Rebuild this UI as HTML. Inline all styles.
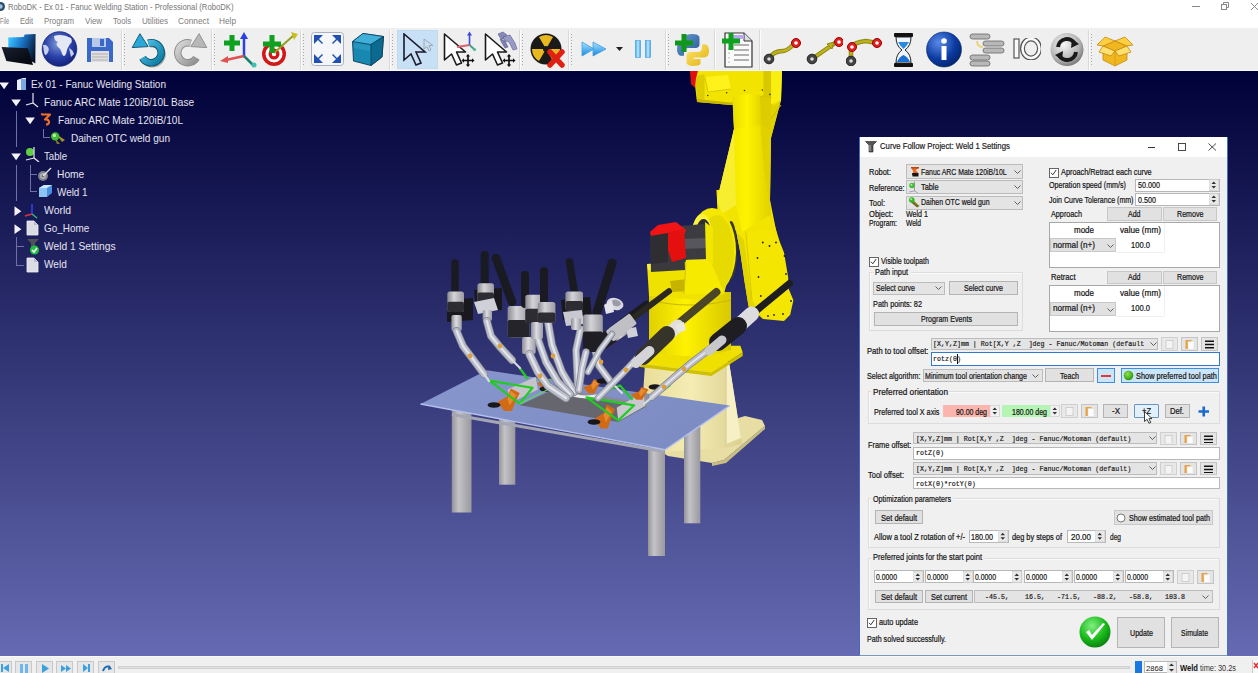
<!DOCTYPE html><html><head><meta charset="utf-8"><style>html,body{margin:0;padding:0;width:1258px;height:673px;overflow:hidden;background:#f0f0f0;}body{position:relative;font-family:"Liberation Sans",sans-serif;}.t{position:absolute;white-space:pre;transform-origin:0 0;-webkit-font-smoothing:antialiased;}.r{position:absolute;box-sizing:border-box;}</style></head><body><div class="r" style="left:0px;top:0px;width:1258px;height:28px;background:#ffffff;"></div>
<svg class="r" style="left:0px;top:2px;" width="6" height="9" viewBox="0 0 6 9"><circle cx="0.5" cy="4.5" r="4.5" fill="#2b4a6a"/><circle cx="0.5" cy="4.5" r="2.2" fill="#9fc0e0"/></svg>
<div class="t" style="left:7.50px;top:1.96px;font-size:9.5px;line-height:9.5px;color:#767676;transform:scaleX(0.8109);">RoboDK - Ex 01 - Fanuc Welding Station - Professional (RoboDK)</div>
<div class="r" style="left:1192px;top:6px;width:8px;height:1px;background:#888;"></div>
<svg class="r" style="left:1220px;top:2px;" width="9" height="9" viewBox="0 0 9 9"><rect x="1.5" y="2.5" width="5" height="5" fill="none" stroke="#888" stroke-width="1"/><path d="M3.5 2.5V0.5H8.5V5.5H6.5" fill="none" stroke="#888" stroke-width="1"/></svg>
<svg class="r" style="left:1250px;top:2px;" width="8" height="9" viewBox="0 0 8 9"><path d="M1 1L8 8M8 1L1 8" stroke="#888" stroke-width="1"/></svg>
<div class="t" style="left:0.00px;top:16.88px;font-size:9px;line-height:9px;color:#7c7c7c;transform:scaleX(0.6206);">File</div>
<div class="t" style="left:20.00px;top:16.88px;font-size:9px;line-height:9px;color:#7c7c7c;transform:scaleX(0.8382);">Edit</div>
<div class="t" style="left:44.00px;top:16.88px;font-size:9px;line-height:9px;color:#7c7c7c;transform:scaleX(0.8693);">Program</div>
<div class="t" style="left:85.00px;top:16.88px;font-size:9px;line-height:9px;color:#7c7c7c;transform:scaleX(0.8787);">View</div>
<div class="t" style="left:113.00px;top:16.88px;font-size:9px;line-height:9px;color:#7c7c7c;transform:scaleX(0.8567);">Tools</div>
<div class="t" style="left:142.00px;top:16.88px;font-size:9px;line-height:9px;color:#7c7c7c;transform:scaleX(0.8964);">Utilities</div>
<div class="t" style="left:178.00px;top:16.88px;font-size:9px;line-height:9px;color:#7c7c7c;transform:scaleX(0.9248);">Connect</div>
<div class="t" style="left:219.00px;top:16.88px;font-size:9px;line-height:9px;color:#7c7c7c;transform:scaleX(0.9184);">Help</div>
<div class="r" style="left:0px;top:28px;width:1258px;height:43px;background:#efefef;border-bottom:1px solid #f8f8f8;"></div>
<div class="r" style="left:0px;top:71px;width:1258px;height:585px;background:linear-gradient(180deg,#000138,#656ab2);"></div>
<div class="r" style="left:0px;top:656px;width:1258px;height:17px;background:#f0f0f0;border-top:1px solid #fafafa;"></div>
<svg class="r" style="left:0px;top:0px;pointer-events:none;" width="1258" height="673" viewBox="0 0 1258 673"><defs><linearGradient id="gLeg" x1="0" y1="0" x2="1" y2="0"><stop offset="0" stop-color="#929298"/><stop offset="0.35" stop-color="#c4c4c8"/><stop offset="0.7" stop-color="#acacb0"/><stop offset="1" stop-color="#98989e"/></linearGradient><linearGradient id="gTop" x1="0" y1="0" x2="1" y2="0.3"><stop offset="0" stop-color="#8896ce"/><stop offset="1" stop-color="#7e8cc4"/></linearGradient><linearGradient id="gPed" x1="0" y1="0" x2="1" y2="0"><stop offset="0" stop-color="#e8dc98"/><stop offset="0.5" stop-color="#f4ecb4"/><stop offset="1" stop-color="#dcd090"/></linearGradient><linearGradient id="gCyl" x1="0" y1="0" x2="1" y2="0"><stop offset="0" stop-color="#e0d000"/><stop offset="0.45" stop-color="#fff200"/><stop offset="1" stop-color="#d8c800"/></linearGradient><linearGradient id="gArm" x1="0" y1="0" x2="1" y2="0"><stop offset="0" stop-color="#e8dc00"/><stop offset="0.5" stop-color="#fff400"/><stop offset="1" stop-color="#e0d200"/></linearGradient></defs><polygon points="650.0,445.0 745.0,416.0 762.0,420.0 765.0,426.0 724.0,460.0 712.0,463.0 668.0,456.0" fill="#e8dea4" /><polygon points="765.0,426.0 724.0,460.0 712.0,463.0 712.0,466.0 726.0,463.0 765.0,429.0" fill="#c8be84" /><polygon points="645.0,364.0 729.0,362.0 741.0,438.0 742.0,444.0 726.0,448.0 660.0,452.0 640.0,440.0" fill="url(#gPed)" /><polygon points="726.0,365.0 729.0,362.0 741.0,438.0 726.0,444.0" fill="#f6f0c4" /><path d="M726 366 L726 446" stroke="#d4c890" stroke-width="1" fill="none"/><polygon points="636.7,359.2 655.7,345.8 740.4,345.8 742.7,352.5 711.4,372.6 640.0,363.7" fill="#efe000" /><polygon points="640.0,363.7 711.4,372.6 742.7,352.5 742.7,356.0 711.4,376.0 640.0,367.0" fill="#cfc000" /><path d="M649 292 L731 292 L731 350 Q690 362 649 350 Z" fill="url(#gCyl)"/><path d="M649 300 Q690 310 731 300" fill="none" stroke="#c8b800" stroke-width="1.2"/><polygon points="716.4,190.0 767.4,190.0 771.5,215.0 779.8,242.0 784.0,252.4 788.2,277.4 788.2,287.8 793.4,300.2 790.2,314.8 784.0,321.0 763.2,319.0 748.6,306.5 744.5,281.5 740.3,252.4 736.2,231.6 718.0,215.0" fill="#f4e600" /><polygon points="736.2,231.6 740.3,252.4 744.5,281.5 748.6,306.5 763.2,319.0 752.0,300.0 748.0,270.0 744.0,240.0" fill="#e2d400" /><path d="M742 190 L752 300" stroke="#d8ca00" stroke-width="1" fill="none"/><circle cx="762.8" cy="242.5" r="0.9" fill="#202010"/><circle cx="769.5" cy="246" r="0.9" fill="#202010"/><circle cx="776" cy="242.5" r="0.9" fill="#202010"/><circle cx="757.5" cy="258" r="0.9" fill="#202010"/><circle cx="784.5" cy="256" r="0.9" fill="#202010"/><circle cx="758.5" cy="277" r="0.9" fill="#202010"/><circle cx="786" cy="274" r="0.9" fill="#202010"/><circle cx="760.8" cy="296" r="0.9" fill="#202010"/><circle cx="774" cy="315" r="0.9" fill="#202010"/><circle cx="783" cy="314" r="0.9" fill="#202010"/><circle cx="768" cy="316" r="0.9" fill="#202010"/><circle cx="791" cy="301" r="0.9" fill="#202010"/><path d="M788.2 285.7 L748.6 314.8" stroke="#1c1c20" stroke-width="4.5" fill="none" stroke-linecap="round"/><polygon points="733.0,96.0 781.0,100.0 771.0,138.0 770.0,200.0 778.0,240.0 767.0,230.0 740.0,232.0 718.0,214.0 717.0,200.0 734.0,129.0" fill="#f2e400" /><polygon points="733.0,97.0 758.0,97.0 764.0,170.0 770.0,215.0 742.0,232.0 736.0,205.0 722.0,200.0 734.0,129.0" fill="url(#gArm)" /><polygon points="758.0,97.0 781.0,100.0 771.0,138.0 770.0,200.0 772.0,230.0 764.0,170.0" fill="#e0d200" /><path d="M771 119 L781 105" stroke="#c8b800" stroke-width="1" fill="none"/><polygon points="717.0,200.0 734.0,129.0 736.0,205.0 722.0,214.0" fill="#f8ee30" /><polygon points="695.0,71.0 782.0,71.0 781.0,100.0 774.0,105.0 764.0,101.0 731.0,105.0 697.0,102.0 695.0,85.0" fill="#f2e400" /><polygon points="695.6,76.0 704.5,74.0 704.5,99.0 697.0,101.0" fill="#dccc00" /><polygon points="697.0,99.0 731.0,102.5 770.0,94.0 774.0,97.0 764.0,101.0 731.0,105.0 697.0,102.0" fill="#c8b800" /><polygon points="763.4,71.0 771.2,71.0 771.2,97.0 763.4,99.0" fill="#d8c800" /><polygon points="771.2,71.0 782.0,71.0 781.0,100.0 771.2,104.0" fill="#f8ee10" /><polygon points="705.0,77.0 728.0,75.0 731.0,89.0 708.0,92.0" fill="#fff21a" /><path d="M705 77 L708 92 L731 89" stroke="#d0c000" stroke-width="0.8" fill="none"/><polygon points="690.0,71.0 698.0,71.0 696.0,78.0 695.0,88.0 691.0,84.0" fill="#e01010" /><circle cx="707.8" cy="95.5" r="0.8" fill="#303010"/><circle cx="726.7" cy="92.7" r="0.8" fill="#303010"/><circle cx="744.5" cy="90.5" r="0.8" fill="#303010"/><circle cx="762.3" cy="90" r="0.8" fill="#303010"/><circle cx="770" cy="94.4" r="0.8" fill="#303010"/><circle cx="762.3" cy="99.4" r="0.8" fill="#303010"/><path d="M732.3 97 Q746 92 760 95.5 L762 125 L734 129 Z" fill="url(#gArm)"/><polygon points="760.0,96.0 771.0,98.0 770.0,130.0 762.0,125.0" fill="#dccc00" /><polygon points="647.0,264.0 686.0,262.0 700.0,262.0 731.0,266.0 724.0,294.0 700.0,300.0 649.0,296.0" fill="#f0e200" /><polygon points="647.0,264.0 686.0,262.0 686.0,268.0 648.0,270.0" fill="#fcf23a" /><polygon points="670.0,281.0 687.0,279.0 690.0,291.0 672.0,292.0" fill="#c4b400" /><ellipse cx="731" cy="250" rx="6" ry="29" fill="#38382e"/><ellipse cx="712" cy="251" rx="24" ry="43" fill="#f4e800"/><ellipse cx="717" cy="253" rx="17" ry="38" fill="#e6da00"/><ellipse cx="702" cy="237" rx="10.5" ry="23" fill="#faf23c"/><ellipse cx="703.5" cy="239" rx="8.5" ry="20" fill="#2e2e32"/><polygon points="685.8,259.4 708.7,256.2 724.0,292.7 683.7,294.7" fill="#f6ea00" /><path d="M686 262 L684 294" stroke="#d0c000" stroke-width="1" fill="none"/><polygon points="680.0,226.0 704.0,224.0 709.0,240.0 709.0,259.0 681.0,260.0" fill="#3c3c40" /><polygon points="681.0,239.0 708.0,238.0 708.0,248.0 681.0,249.0" fill="#56565c" /><polygon points="705.0,222.0 713.0,228.0 713.0,264.0 706.0,260.0" fill="#f2e600" /><polygon points="650.0,232.0 684.0,232.0 685.0,270.0 651.0,272.0" fill="#3a3a3e" /><polygon points="650.0,232.0 658.0,225.0 676.0,222.0 686.0,230.0 684.0,235.0 652.0,238.0" fill="#f01414" /><polygon points="668.0,232.0 684.0,229.0 686.0,258.0 672.0,262.0 668.0,250.0" fill="#e41010" /><polygon points="650.0,236.0 668.0,233.0 668.0,262.0 651.0,264.0" fill="#2e2e32" /><rect x="499" y="418" width="16.299999999999955" height="66.69999999999999" fill="url(#gLeg)"/><rect x="684" y="425" width="16.299999999999955" height="98.29999999999995" fill="url(#gLeg)"/><rect x="451.8" y="410" width="19.69999999999999" height="102.5" fill="url(#gLeg)"/><rect x="648" y="449" width="17" height="107" fill="url(#gLeg)"/><path d="M452 414.5 L664 451.5" stroke="#a4a6b4" stroke-width="3" fill="none"/><polygon points="420.5,404.0 486.8,370.3 729.7,405.6 665.0,449.7" fill="url(#gTop)" /><path d="M420.5 404 L665 449.7 L729.7 405.6" stroke="#b4c0ee" stroke-width="1.3" fill="none"/><polygon points="519.7,405.3 550.0,391.0 647.0,406.0 618.3,422.0" fill="#66666e" /><polygon points="550.0,391.0 647.0,406.0 645.0,403.0 552.0,388.0" fill="#8a8a94" /><polygon points="507.8,389.4 535.6,376.7 538.0,389.4 510.2,403.0" fill="#c4c4ca" /><polygon points="616.7,407.7 643.8,391.8 645.3,406.1 618.3,421.2" fill="#c8c8ce" /><polygon points="643.8,391.8 647.0,393.0 648.0,407.0 645.3,406.1" fill="#909098" /><path d="M568 392 Q580 400 601 395" stroke="#f0f0f4" stroke-width="3" fill="none"/><polygon points="504.2,411.0 497.5,402.0 507.5,396.4 510.8,388.6 519.7,393.1 515.3,402.0 511.9,411.0" fill="#d06a14" /><polygon points="507.5,398.7 510.8,390.8 516.4,395.3 509.7,405.4" fill="#e88a30" /><ellipse cx="494" cy="405" rx="6.5" ry="2.8" fill="#18181c"/><polygon points="541.0,387.0 537.2,383.2 543.0,380.8 544.9,377.5 550.0,379.4 547.4,383.2 545.5,387.0" fill="#d06a14" /><polygon points="543.0,381.8 544.9,378.4 548.1,380.4 544.2,384.6" fill="#e88a30" /><ellipse cx="546" cy="389" rx="6.5" ry="2.8" fill="#18181c"/><polygon points="588.5,393.4 583.3,387.6 591.2,384.0 593.8,379.0 600.8,381.9 597.3,387.6 594.7,393.4" fill="#d06a14" /><polygon points="591.2,385.5 593.8,380.4 598.2,383.3 592.9,389.8" fill="#e88a30" /><ellipse cx="603" cy="381" rx="6.5" ry="2.8" fill="#18181c"/><polygon points="600.6,428.4 594.5,418.8 603.7,412.9 606.8,404.5 615.0,409.3 610.9,418.8 607.8,428.4" fill="#d06a14" /><polygon points="603.7,415.3 606.8,406.9 611.9,411.7 605.8,422.4" fill="#e88a30" /><ellipse cx="594" cy="422" rx="6.5" ry="2.8" fill="#18181c"/><polygon points="636.2,399.7 631.0,394.6 638.9,391.4 641.5,387.0 648.5,389.5 645.0,394.6 642.4,399.7" fill="#d06a14" /><polygon points="638.9,392.7 641.5,388.3 645.9,390.8 640.6,396.5" fill="#e88a30" /><ellipse cx="655" cy="387" rx="6.5" ry="2.8" fill="#18181c"/><path d="M489.5 380.7 L532.5 387.8 L519.7 403.7 Z" stroke="#22cc22" stroke-width="2.2" fill="none" stroke-linejoin="round"/><path d="M519.7 368 L527.7 379" stroke="#22cc22" stroke-width="2.2" fill="none" stroke-linejoin="round"/><path d="M586.5 397.4 L634.2 405.3 L618.3 420.4 Z" stroke="#22cc22" stroke-width="2.2" fill="none" stroke-linejoin="round"/><path d="M604 391.8 L620 385.4 L632.6 399.7" stroke="#22cc22" stroke-width="2.2" fill="none" stroke-linejoin="round"/><path d="M519.7 403.7 L553 387" stroke="#60d860" stroke-width="1.2" fill="none"/><path d="M645.3 403 L670.8 385.4" stroke="#60d860" stroke-width="1.2" fill="none"/><path d="M537 381 L560 378" stroke="#60d860" stroke-width="1.2" fill="none"/><defs><linearGradient id="gHead" x1="0" y1="0" x2="1" y2="0"><stop offset="0" stop-color="#88888e"/><stop offset="0.4" stop-color="#d4d4d8"/><stop offset="1" stop-color="#9a9aa0"/></linearGradient><linearGradient id="gConn" x1="0" y1="0" x2="1" y2="0"><stop offset="0" stop-color="#8c8c94"/><stop offset="0.45" stop-color="#dcdce2"/><stop offset="1" stop-color="#9c9ca4"/></linearGradient></defs><path d="M580.5 329.0 L576.0 350.0 L577.0 372.0 L578.0 390.0" stroke="#7c7e8c" stroke-width="7.4" fill="none" stroke-linecap="round" stroke-linejoin="round"/><path d="M580.5 329.0 L576.0 350.0 L577.0 372.0 L578.0 390.0" stroke="#b8bac6" stroke-width="6" fill="none" stroke-linecap="round" stroke-linejoin="round"/><path d="M580.5 329.0 L576.0 350.0 L577.0 372.0 L578.0 390.0" stroke="#e2e4ec" stroke-width="2.0999999999999996" fill="none" stroke-linecap="round" stroke-linejoin="round"/><path d="M548.0 322.0 L552.0 345.0 L562.0 372.0 L574.0 392.0" stroke="#7c7e8c" stroke-width="7.9" fill="none" stroke-linecap="round" stroke-linejoin="round"/><path d="M548.0 322.0 L552.0 345.0 L562.0 372.0 L574.0 392.0" stroke="#b8bac6" stroke-width="6.5" fill="none" stroke-linecap="round" stroke-linejoin="round"/><path d="M548.0 322.0 L552.0 345.0 L562.0 372.0 L574.0 392.0" stroke="#e2e4ec" stroke-width="2.275" fill="none" stroke-linecap="round" stroke-linejoin="round"/><path d="M537.8 339.0 L546.0 362.0 L558.0 382.0 L570.0 394.0" stroke="#7c7e8c" stroke-width="7.9" fill="none" stroke-linecap="round" stroke-linejoin="round"/><path d="M537.8 339.0 L546.0 362.0 L558.0 382.0 L570.0 394.0" stroke="#b8bac6" stroke-width="6.5" fill="none" stroke-linecap="round" stroke-linejoin="round"/><path d="M537.8 339.0 L546.0 362.0 L558.0 382.0 L570.0 394.0" stroke="#e2e4ec" stroke-width="2.275" fill="none" stroke-linecap="round" stroke-linejoin="round"/><path d="M594.5 348.0 L599.0 366.0 L611.0 382.0" stroke="#7c7e8c" stroke-width="7.4" fill="none" stroke-linecap="round" stroke-linejoin="round"/><path d="M594.5 348.0 L599.0 366.0 L611.0 382.0" stroke="#b8bac6" stroke-width="6" fill="none" stroke-linecap="round" stroke-linejoin="round"/><path d="M594.5 348.0 L599.0 366.0 L611.0 382.0" stroke="#e2e4ec" stroke-width="2.0999999999999996" fill="none" stroke-linecap="round" stroke-linejoin="round"/><path d="M611.0 382.0 L622.0 393.0" stroke="#d8dae2" stroke-width="2.2" fill="none" stroke-linecap="round"/><path d="M455 263 L455 291" stroke="#1a1a22" stroke-width="7.5" fill="none" stroke-linecap="round"/><polygon points="447.0,300.0 473.0,298.0 473.0,320.0 447.0,322.0" fill="#18181e" /><rect x="447.3" y="291.6" width="16.69999999999999" height="20.399999999999977" rx="2.5" fill="url(#gHead)"/><rect x="447.3" y="301.8" width="16.69999999999999" height="10.2" rx="2" fill="#2c2c32"/><rect x="451.4" y="315" width="10.400000000000034" height="16" rx="2" fill="url(#gConn)"/><path d="M456.6 331.0 L463.0 346.0 L472.0 358.0 L484.0 374.0" stroke="#7c7e8c" stroke-width="7.9" fill="none" stroke-linecap="round" stroke-linejoin="round"/><path d="M456.6 331.0 L463.0 346.0 L472.0 358.0 L484.0 374.0" stroke="#b8bac6" stroke-width="6.5" fill="none" stroke-linecap="round" stroke-linejoin="round"/><path d="M456.6 331.0 L463.0 346.0 L472.0 358.0 L484.0 374.0" stroke="#e2e4ec" stroke-width="2.275" fill="none" stroke-linecap="round" stroke-linejoin="round"/><path d="M484.0 374.0 L489.0 381.0" stroke="#d8dae2" stroke-width="2.2" fill="none" stroke-linecap="round"/><path d="M484.7 255 L484.7 284" stroke="#1a1a22" stroke-width="8" fill="none" stroke-linecap="round"/><polygon points="474.0,290.0 502.0,288.0 502.0,310.0 476.0,311.0" fill="#18181e" /><rect x="477.4" y="283.3" width="16.600000000000023" height="18.69999999999999" rx="2.5" fill="url(#gHead)"/><rect x="477.4" y="292.6" width="16.600000000000023" height="9.3" rx="2" fill="#2c2c32"/><polygon points="474.0,302.0 494.0,298.0 498.0,310.0 478.0,314.0" fill="#d0d0d8" /><rect x="482.6" y="310" width="9.399999999999977" height="11" rx="2" fill="url(#gConn)"/><path d="M486.8 321.0 L491.0 336.0 L500.0 347.0 L512.0 360.0" stroke="#7c7e8c" stroke-width="7.9" fill="none" stroke-linecap="round" stroke-linejoin="round"/><path d="M486.8 321.0 L491.0 336.0 L500.0 347.0 L512.0 360.0" stroke="#b8bac6" stroke-width="6.5" fill="none" stroke-linecap="round" stroke-linejoin="round"/><path d="M486.8 321.0 L491.0 336.0 L500.0 347.0 L512.0 360.0" stroke="#e2e4ec" stroke-width="2.275" fill="none" stroke-linecap="round" stroke-linejoin="round"/><path d="M512.0 360.0 L520.0 368.0" stroke="#d8dae2" stroke-width="2.2" fill="none" stroke-linecap="round"/><path d="M496 258 L512 302" stroke="#1a1a22" stroke-width="8.5" fill="none" stroke-linecap="round"/><rect x="507.6" y="306" width="21.799999999999955" height="31.399999999999977" rx="2.5" fill="url(#gHead)"/><rect x="507.6" y="320.1" width="21.799999999999955" height="17.3" rx="2" fill="#24242a"/><rect x="522" y="337" width="13.700000000000045" height="17" rx="2" fill="url(#gConn)"/><path d="M529.4 354.0 L538.0 372.0 L548.0 386.0 L566.0 398.0" stroke="#7c7e8c" stroke-width="8.4" fill="none" stroke-linecap="round" stroke-linejoin="round"/><path d="M529.4 354.0 L538.0 372.0 L548.0 386.0 L566.0 398.0" stroke="#b8bac6" stroke-width="7" fill="none" stroke-linecap="round" stroke-linejoin="round"/><path d="M529.4 354.0 L538.0 372.0 L548.0 386.0 L566.0 398.0" stroke="#e2e4ec" stroke-width="2.4499999999999997" fill="none" stroke-linecap="round" stroke-linejoin="round"/><path d="M525 275 L525 304" stroke="#1a1a22" stroke-width="8" fill="none" stroke-linecap="round"/><rect x="525.3" y="294.7" width="18.700000000000045" height="28.100000000000023" rx="2.5" fill="url(#gHead)"/><rect x="525.3" y="308.8" width="18.700000000000045" height="14.1" rx="2" fill="#2c2c32"/><rect x="531" y="322" width="12" height="17" rx="2" fill="url(#gConn)"/><path d="M544 271 L544 302" stroke="#1a1a22" stroke-width="8" fill="none" stroke-linecap="round"/><rect x="537.8" y="302" width="17.600000000000023" height="20.80000000000001" rx="2.5" fill="url(#gHead)"/><rect x="537.8" y="312.4" width="17.600000000000023" height="10.4" rx="2" fill="#2c2c32"/><path d="M569.5 262 L574.7 294" stroke="#1a1a22" stroke-width="7.5" fill="none" stroke-linecap="round"/><polygon points="561.0,300.0 590.0,297.0 592.0,318.0 563.0,320.0" fill="#18181e" /><rect x="565.4" y="291.6" width="17.600000000000023" height="18.69999999999999" rx="2.5" fill="url(#gHead)"/><rect x="565.4" y="301.0" width="17.600000000000023" height="9.3" rx="2" fill="#2c2c32"/><polygon points="563.0,312.0 582.0,310.0 584.0,324.0 566.0,326.0" fill="#c8c8d0" /><rect x="571" y="318" width="10" height="12" rx="2" fill="url(#gConn)"/><path d="M612.2 263 L597 312" stroke="#1a1a22" stroke-width="9" fill="none" stroke-linecap="round"/><rect x="583" y="314.5" width="19.799999999999955" height="37.5" rx="2.5" fill="url(#gHead)"/><rect x="583" y="331.4" width="19.799999999999955" height="20.6" rx="2" fill="#1e1e24"/><ellipse cx="615" cy="304" rx="8.5" ry="6" fill="#d8d8e0" transform="rotate(15 615 304)"/><ellipse cx="616" cy="303" rx="5" ry="3.2" fill="#9a9aa8" transform="rotate(15 616 303)"/><polygon points="604.0,305.0 612.0,300.0 614.0,312.0 606.0,314.0" fill="#e4e4ea" /><path d="M586.0 352.0 L582.0 368.0 L579.0 390.0" stroke="#7c7e8c" stroke-width="7.4" fill="none" stroke-linecap="round" stroke-linejoin="round"/><path d="M586.0 352.0 L582.0 368.0 L579.0 390.0" stroke="#b8bac6" stroke-width="6" fill="none" stroke-linecap="round" stroke-linejoin="round"/><path d="M586.0 352.0 L582.0 368.0 L579.0 390.0" stroke="#e2e4ec" stroke-width="2.0999999999999996" fill="none" stroke-linecap="round" stroke-linejoin="round"/><path d="M646.5 304 L623.6 320.7" stroke="#1a1a22" stroke-width="6.5" fill="none" stroke-linecap="round"/><g transform="rotate(-35 612 336)"><rect x="596" y="328" width="32" height="15" rx="3" fill="#1e1e24"/><rect x="612" y="328" width="16" height="15" rx="3" fill="url(#gHead)"/></g><polygon points="626.0,329.0 636.0,327.0 638.0,336.0 628.0,338.0" fill="#d0d0d8" /><path d="M669 291.2 L628.9 321.3" stroke="#2a2820" stroke-width="6" fill="none" stroke-linecap="round"/><g transform="rotate(-37 624 326)"><rect x="606" y="319" width="30" height="13" rx="2" fill="#c0c0c4"/></g><path d="M612.0 334.0 L600.0 350.0 L588.0 372.0" stroke="#7c7e8c" stroke-width="6.4" fill="none" stroke-linecap="round" stroke-linejoin="round"/><path d="M612.0 334.0 L600.0 350.0 L588.0 372.0" stroke="#b8bac6" stroke-width="5" fill="none" stroke-linecap="round" stroke-linejoin="round"/><path d="M612.0 334.0 L600.0 350.0 L588.0 372.0" stroke="#e2e4ec" stroke-width="1.75" fill="none" stroke-linecap="round" stroke-linejoin="round"/><path d="M640.0 355.0 L624.0 372.0 L606.0 390.0 L598.0 398.0" stroke="#7c7e8c" stroke-width="6.9" fill="none" stroke-linecap="round" stroke-linejoin="round"/><path d="M640.0 355.0 L624.0 372.0 L606.0 390.0 L598.0 398.0" stroke="#b8bac6" stroke-width="5.5" fill="none" stroke-linecap="round" stroke-linejoin="round"/><path d="M640.0 355.0 L624.0 372.0 L606.0 390.0 L598.0 398.0" stroke="#e2e4ec" stroke-width="1.9249999999999998" fill="none" stroke-linecap="round" stroke-linejoin="round"/><path d="M716.4 292 L676 325.5" stroke="#4a4428" stroke-width="8" fill="none" stroke-linecap="round"/><path d="M677.6 326 L659 342.8" stroke="#e0e0d8" stroke-width="13" fill="none" stroke-linecap="round"/><path d="M667 334 L643 357" stroke="#36342a" stroke-width="16" fill="none" stroke-linecap="round"/><path d="M649.5 351 L636 363" stroke="#d4d4d8" stroke-width="10" fill="none" stroke-linecap="round"/><polygon points="676.0,325.0 684.0,322.0 686.0,330.0 678.0,333.0" fill="#e8e8e0" /><path d="M713.7 346.0 L690.0 364.0 L670.0 381.0 L652.0 397.0" stroke="#7c7e8c" stroke-width="7.4" fill="none" stroke-linecap="round" stroke-linejoin="round"/><path d="M713.7 346.0 L690.0 364.0 L670.0 381.0 L652.0 397.0" stroke="#b8bac6" stroke-width="6" fill="none" stroke-linecap="round" stroke-linejoin="round"/><path d="M713.7 346.0 L690.0 364.0 L670.0 381.0 L652.0 397.0" stroke="#e2e4ec" stroke-width="2.0999999999999996" fill="none" stroke-linecap="round" stroke-linejoin="round"/><path d="M652.0 397.0 L644.0 404.0" stroke="#d8dae2" stroke-width="2.2" fill="none" stroke-linecap="round"/><path d="M789.5 283.4 L751.6 314.6" stroke="#1e1e22" stroke-width="7" fill="none" stroke-linecap="round"/><path d="M751.6 314 L733.7 330" stroke="#dcdce0" stroke-width="15" fill="none" stroke-linecap="round"/><path d="M738 326 L718 342" stroke="#1e1e22" stroke-width="18" fill="none" stroke-linecap="round"/><path d="M722 340 L709 351" stroke="#c8c8cc" stroke-width="9" fill="none" stroke-linecap="round"/><circle cx="470" cy="356" r="2.4" fill="#d8a040"/><circle cx="500" cy="346" r="2.4" fill="#d8a040"/><circle cx="540" cy="376" r="2.4" fill="#d8a040"/><circle cx="553" cy="356" r="2.4" fill="#d8a040"/><circle cx="601" cy="362" r="2.4" fill="#d8a040"/><circle cx="684" cy="369" r="2.4" fill="#d8a040"/><circle cx="664" cy="387" r="2.4" fill="#d8a040"/><circle cx="626" cy="370" r="2.4" fill="#d8a040"/></svg>
<svg class="r" style="left:0px;top:0px;" width="1" height="1" viewBox="0 0 1 1"><defs><linearGradient id="gFold" x1="0" y1="0" x2="1" y2="1"><stop offset="0" stop-color="#50c8ff"/><stop offset="1" stop-color="#0a3a80"/></linearGradient><radialGradient id="gGlobe" cx="0.35" cy="0.3" r="0.8"><stop offset="0" stop-color="#b8d0ff"/><stop offset="0.5" stop-color="#3a5cc0"/><stop offset="1" stop-color="#0c1c70"/></radialGradient><radialGradient id="gInfo" cx="0.35" cy="0.3" r="0.8"><stop offset="0" stop-color="#5a8ae8"/><stop offset="0.6" stop-color="#0a3aa0"/><stop offset="1" stop-color="#062060"/></radialGradient><radialGradient id="gSync" cx="0.4" cy="0.35" r="0.7"><stop offset="0" stop-color="#f8f8f8"/><stop offset="0.7" stop-color="#b0b0b0"/><stop offset="1" stop-color="#707070"/></radialGradient><linearGradient id="gCube" x1="0" y1="0" x2="1" y2="1"><stop offset="0" stop-color="#40b0e0"/><stop offset="1" stop-color="#0a5a8a"/></linearGradient></defs></svg>
<svg class="r" style="left:0px;top:28px;" width="40" height="42" viewBox="0 0 40 42"><defs><linearGradient id="gFb" x1="0" y1="0.3" x2="1" y2="0.7"><stop offset="0" stop-color="#38c0ff"/><stop offset="0.45" stop-color="#1a70c0"/><stop offset="1" stop-color="#061028"/></linearGradient><linearGradient id="gFf" x1="0" y1="0" x2="1" y2="1"><stop offset="0" stop-color="#1a2030"/><stop offset="1" stop-color="#02040a"/></linearGradient></defs><path d="M8.3 9.5L23.5 8.9L24.8 6.4L35.6 6L35.3 35.6L8.3 19Z" fill="url(#gFb)"/><path d="M1.6 19L28 20.3L33 36.9L6.4 33Z" fill="url(#gFf)"/></svg>
<svg class="r" style="left:40px;top:30px;" width="38" height="38" viewBox="0 0 38 38"><defs><radialGradient id="gGl" cx="0.45" cy="0.35" r="0.7"><stop offset="0" stop-color="#8098d8"/><stop offset="0.55" stop-color="#2840a8"/><stop offset="1" stop-color="#101c70"/></radialGradient></defs><circle cx="19.5" cy="19" r="17.3" fill="url(#gGl)" stroke="#1c2a80" stroke-width="0.8"/><path d="M14 6Q22 3 31 8Q33 12 30 14Q27 18 26 24Q24 28 22 24Q21 19 18 17Q15 14 18 12Q14 11 14 6Z" fill="#e4e8f4"/><path d="M3 15Q6 14 8 17Q10 20 7 24Q5 27 4 22Z" fill="#c8d0ec"/><path d="M29 18Q33 20 34 24L31 27Z" fill="#c8d0ec"/></svg>
<svg class="r" style="left:86px;top:37px;" width="28" height="26" viewBox="0 0 28 26"><path d="M1 1H23L27 5V25H1Z" fill="#3a68c8"/><rect x="6" y="1" width="14" height="9" fill="#b8c8e8"/><rect x="14" y="2" width="4" height="7" fill="#3a68c8"/><rect x="5" y="14" width="18" height="11" fill="#e0e0e0"/><path d="M6 17H22M6 20H22M6 23H22" stroke="#b0b0b0" stroke-width="1"/></svg>
<div class="r" style="left:121px;top:30px;width:1px;height:40px;background:#d8d8d8;border-right:1px solid #fcfcfc;width:2px;"></div>
<svg class="r" style="left:124px;top:34px;" width="2" height="34" viewBox="0 0 2 34"><rect x="0" y="0" width="1" height="1" fill="#a8a8a8"/><rect x="0" y="3" width="1" height="1" fill="#a8a8a8"/><rect x="0" y="6" width="1" height="1" fill="#a8a8a8"/><rect x="0" y="9" width="1" height="1" fill="#a8a8a8"/><rect x="0" y="12" width="1" height="1" fill="#a8a8a8"/><rect x="0" y="15" width="1" height="1" fill="#a8a8a8"/><rect x="0" y="18" width="1" height="1" fill="#a8a8a8"/><rect x="0" y="21" width="1" height="1" fill="#a8a8a8"/><rect x="0" y="24" width="1" height="1" fill="#a8a8a8"/><rect x="0" y="27" width="1" height="1" fill="#a8a8a8"/><rect x="0" y="30" width="1" height="1" fill="#a8a8a8"/></svg>
<svg class="r" style="left:131px;top:32px;" width="38" height="38" viewBox="0 0 38 38"><defs><linearGradient id="gUn" x1="0" y1="0" x2="1" y2="1"><stop offset="0" stop-color="#50c0e8"/><stop offset="1" stop-color="#0a7aa0"/></linearGradient></defs><g transform="translate(1.2,1.5)" opacity="0.45"><path d="M17.3 11.2A10 10 0 1 1 11.6 25.8" fill="none" stroke="#555" stroke-width="6.6"/></g><path d="M17.3 11.2A10 10 0 1 1 11.6 25.8" fill="none" stroke="#0a5070" stroke-width="7.6"/><path d="M17.3 11.2A10 10 0 1 1 11.6 25.8" fill="none" stroke="url(#gUn)" stroke-width="5.8"/><path d="M1.2 15.6L8.9 1.7L17.2 14.6Z" fill="#2aa8d8" stroke="#0a5070" stroke-width="0.9" stroke-linejoin="round"/></svg>
<svg class="r" style="left:171px;top:32px;" width="38" height="38" viewBox="0 0 38 38"><defs><linearGradient id="gRd" x1="0" y1="0" x2="1" y2="1"><stop offset="0" stop-color="#d8d8d8"/><stop offset="1" stop-color="#909090"/></linearGradient></defs><path d="M19.7 11.2A10 10 0 1 0 25.4 25.8" fill="none" stroke="#8a8a8a" stroke-width="7.4"/><path d="M19.7 11.2A10 10 0 1 0 25.4 25.8" fill="none" stroke="url(#gRd)" stroke-width="5.6"/><path d="M35.8 15.6L28.1 1.7L19.8 14.6Z" fill="#b8b8b8" stroke="#8a8a8a" stroke-width="0.9" stroke-linejoin="round"/></svg>
<div class="r" style="left:211px;top:30px;width:1px;height:40px;background:#d8d8d8;border-right:1px solid #fcfcfc;width:2px;"></div>
<svg class="r" style="left:214px;top:34px;" width="2" height="34" viewBox="0 0 2 34"><rect x="0" y="0" width="1" height="1" fill="#a8a8a8"/><rect x="0" y="3" width="1" height="1" fill="#a8a8a8"/><rect x="0" y="6" width="1" height="1" fill="#a8a8a8"/><rect x="0" y="9" width="1" height="1" fill="#a8a8a8"/><rect x="0" y="12" width="1" height="1" fill="#a8a8a8"/><rect x="0" y="15" width="1" height="1" fill="#a8a8a8"/><rect x="0" y="18" width="1" height="1" fill="#a8a8a8"/><rect x="0" y="21" width="1" height="1" fill="#a8a8a8"/><rect x="0" y="24" width="1" height="1" fill="#a8a8a8"/><rect x="0" y="27" width="1" height="1" fill="#a8a8a8"/><rect x="0" y="30" width="1" height="1" fill="#a8a8a8"/></svg>
<svg class="r" style="left:220px;top:32px;" width="38" height="36" viewBox="0 0 38 36"><path d="M4 11H20M12 3V19" stroke="#10a020" stroke-width="5"/><path d="M24 24V5" stroke="#2a40e0" stroke-width="2.5"/><path d="M20 7L24 0L28 7Z" fill="#2a40e0"/><path d="M24 24L6 28" stroke="#e05050" stroke-width="2.5"/><path d="M8 24L0 29L8 31Z" fill="#e05050"/><path d="M24 24L33 33" stroke="#208070" stroke-width="2.5"/><circle cx="34" cy="33" r="2.5" fill="#40c0b0"/></svg>
<svg class="r" style="left:261px;top:31px;" width="38" height="38" viewBox="0 0 38 38"><circle cx="13" cy="23" r="12" fill="#d01818"/><circle cx="13" cy="23" r="8.5" fill="#fff"/><circle cx="13" cy="23" r="5.5" fill="#d01818"/><circle cx="13" cy="23" r="2.2" fill="#fff"/><path d="M13 22L33 4" stroke="#90a020" stroke-width="2"/><path d="M30 1L37 3L33 9Z" fill="#c8c020"/><path d="M2 13H20M11 4V22" stroke="#10a020" stroke-width="5"/></svg>
<div class="r" style="left:300px;top:30px;width:1px;height:40px;background:#d8d8d8;border-right:1px solid #fcfcfc;width:2px;"></div>
<svg class="r" style="left:303px;top:34px;" width="2" height="34" viewBox="0 0 2 34"><rect x="0" y="0" width="1" height="1" fill="#a8a8a8"/><rect x="0" y="3" width="1" height="1" fill="#a8a8a8"/><rect x="0" y="6" width="1" height="1" fill="#a8a8a8"/><rect x="0" y="9" width="1" height="1" fill="#a8a8a8"/><rect x="0" y="12" width="1" height="1" fill="#a8a8a8"/><rect x="0" y="15" width="1" height="1" fill="#a8a8a8"/><rect x="0" y="18" width="1" height="1" fill="#a8a8a8"/><rect x="0" y="21" width="1" height="1" fill="#a8a8a8"/><rect x="0" y="24" width="1" height="1" fill="#a8a8a8"/><rect x="0" y="27" width="1" height="1" fill="#a8a8a8"/><rect x="0" y="30" width="1" height="1" fill="#a8a8a8"/></svg>
<svg class="r" style="left:311px;top:32px;" width="33" height="34" viewBox="0 0 33 34"><rect x="0.5" y="0.5" width="32" height="33" rx="3" fill="#f4f6fa" stroke="#a8b0c0"/><path d="M3 3H12L8 7L12 11L11 12L7 8L3 12Z" fill="#2050b0"/><path d="M30 3H21L25 7L21 11L22 12L26 8L30 12Z" fill="#2050b0"/><path d="M3 31H12L8 27L12 23L11 22L7 26L3 22Z" fill="#2050b0"/><path d="M30 31H21L25 27L21 23L22 22L26 26L30 22Z" fill="#2050b0"/></svg>
<svg class="r" style="left:351px;top:31px;" width="34" height="36" viewBox="0 0 34 36"><path d="M1.5 10.5L12 2.5L32.5 5.5L31 26L20 34.5L2.5 30Z" fill="#1888b0" stroke="#0a3a58" stroke-width="0.9" stroke-linejoin="round"/><path d="M1.5 10.5L12 2.5L32.5 5.5L20 13.5Z" fill="#40b0d8" stroke="#0a3a58" stroke-width="0.7" stroke-linejoin="round"/><path d="M20 13.5L32.5 5.5L31 26L20 34.5Z" fill="#0c6a90" stroke="#0a3a58" stroke-width="0.7" stroke-linejoin="round"/><path d="M3 12L19 14.5L19 20L3 17Z" fill="#30a0c8" opacity="0.6"/></svg>
<div class="r" style="left:389px;top:30px;width:1px;height:40px;background:#d8d8d8;border-right:1px solid #fcfcfc;width:2px;"></div>
<svg class="r" style="left:392px;top:34px;" width="2" height="34" viewBox="0 0 2 34"><rect x="0" y="0" width="1" height="1" fill="#a8a8a8"/><rect x="0" y="3" width="1" height="1" fill="#a8a8a8"/><rect x="0" y="6" width="1" height="1" fill="#a8a8a8"/><rect x="0" y="9" width="1" height="1" fill="#a8a8a8"/><rect x="0" y="12" width="1" height="1" fill="#a8a8a8"/><rect x="0" y="15" width="1" height="1" fill="#a8a8a8"/><rect x="0" y="18" width="1" height="1" fill="#a8a8a8"/><rect x="0" y="21" width="1" height="1" fill="#a8a8a8"/><rect x="0" y="24" width="1" height="1" fill="#a8a8a8"/><rect x="0" y="27" width="1" height="1" fill="#a8a8a8"/><rect x="0" y="30" width="1" height="1" fill="#a8a8a8"/></svg>
<div class="r" style="left:397px;top:29.5px;width:41px;height:39px;background:#c8e0f6;border:1px solid #c0daf2;"></div>
<svg class="r" style="left:402px;top:33px;" width="34" height="34" viewBox="0 0 34 34"><path d="M2 1L2 27L9 21L14 32L19 30L14 19L23 19Z" fill="none" stroke="#1a1a2a" stroke-width="1.6"/><path d="M22 6L22 16L25 13.5L27 18L29 17L27 12.5L31 12.5Z" fill="none" stroke="#a0a8b8" stroke-width="1"/></svg>
<svg class="r" style="left:443px;top:31px;" width="36" height="38" viewBox="0 0 36 38"><path d="M1.5 3L1.5 29L8.5 23L13.5 34L18.5 32L13.5 21L22.5 21Z" fill="#fff" stroke="#1a1a1a" stroke-width="1.6" stroke-linejoin="round"/><path d="M26.5 14V3" stroke="#3a48e0" stroke-width="1.6"/><path d="M24 4.5L26.5 0.5L29 4.5Z" fill="#3a48e0"/><path d="M26.5 14L14 16" stroke="#e06070" stroke-width="1.8"/><path d="M26.5 14L31 18" stroke="#40a080" stroke-width="1.8"/><circle cx="31.5" cy="18.5" r="1.6" fill="#50b8a0"/><path d="M20 29.5H30M25 24.5V34.5" stroke="#111" stroke-width="1.7"/><path d="M25 23L22.8 25.5H27.2Z M25 36L22.8 33.5H27.2Z M18.5 29.5L21 27.3V31.7Z M31.5 29.5L29 27.3V31.7Z" fill="#111"/></svg>
<svg class="r" style="left:484px;top:31px;" width="36" height="38" viewBox="0 0 36 38"><path d="M1.5 3L1.5 29L8.5 23L13.5 34L18.5 32L13.5 21L22.5 21Z" fill="#fff" stroke="#1a1a1a" stroke-width="1.6" stroke-linejoin="round"/><path d="M14 3L19 1L23 4L21 8L17 8Z" fill="#8888b8" stroke="#5a5a88" stroke-width="0.6"/><path d="M19 6L26 4L31 12L33 18L29 19L25 11L21 10Z" fill="#9a9ac8" stroke="#5a5a88" stroke-width="0.6"/><path d="M16 8L21 10L24 16L21 17L18 12Z" fill="#8080b0" stroke="#5a5a88" stroke-width="0.6"/><path d="M20 29.5H30M25 24.5V34.5" stroke="#111" stroke-width="1.7"/><path d="M25 23L22.8 25.5H27.2Z M25 36L22.8 33.5H27.2Z M18.5 29.5L21 27.3V31.7Z M31.5 29.5L29 27.3V31.7Z" fill="#111"/></svg>
<div class="r" style="left:519px;top:30px;width:1px;height:40px;background:#d8d8d8;border-right:1px solid #fcfcfc;width:2px;"></div>
<svg class="r" style="left:522px;top:34px;" width="2" height="34" viewBox="0 0 2 34"><rect x="0" y="0" width="1" height="1" fill="#a8a8a8"/><rect x="0" y="3" width="1" height="1" fill="#a8a8a8"/><rect x="0" y="6" width="1" height="1" fill="#a8a8a8"/><rect x="0" y="9" width="1" height="1" fill="#a8a8a8"/><rect x="0" y="12" width="1" height="1" fill="#a8a8a8"/><rect x="0" y="15" width="1" height="1" fill="#a8a8a8"/><rect x="0" y="18" width="1" height="1" fill="#a8a8a8"/><rect x="0" y="21" width="1" height="1" fill="#a8a8a8"/><rect x="0" y="24" width="1" height="1" fill="#a8a8a8"/><rect x="0" y="27" width="1" height="1" fill="#a8a8a8"/><rect x="0" y="30" width="1" height="1" fill="#a8a8a8"/></svg>
<svg class="r" style="left:530px;top:32px;" width="36" height="36" viewBox="0 0 36 36"><circle cx="16" cy="17" r="15.5" fill="#1a1a1a"/><path d="M16 17L9 5A14 14 0 0 1 23 5Z" fill="#e8b820"/><path d="M16 17L30 17A14 14 0 0 1 23 29Z" fill="#e8b820"/><path d="M16 17L9 29A14 14 0 0 1 2 17Z" fill="#e8b820"/><circle cx="16" cy="17" r="3" fill="#1a1a1a"/><path d="M20 20L32 33M32 20L20 33" stroke="#e02010" stroke-width="5.5" stroke-linecap="round"/></svg>
<div class="r" style="left:568px;top:30px;width:1px;height:40px;background:#d8d8d8;border-right:1px solid #fcfcfc;width:2px;"></div>
<svg class="r" style="left:571px;top:34px;" width="2" height="34" viewBox="0 0 2 34"><rect x="0" y="0" width="1" height="1" fill="#a8a8a8"/><rect x="0" y="3" width="1" height="1" fill="#a8a8a8"/><rect x="0" y="6" width="1" height="1" fill="#a8a8a8"/><rect x="0" y="9" width="1" height="1" fill="#a8a8a8"/><rect x="0" y="12" width="1" height="1" fill="#a8a8a8"/><rect x="0" y="15" width="1" height="1" fill="#a8a8a8"/><rect x="0" y="18" width="1" height="1" fill="#a8a8a8"/><rect x="0" y="21" width="1" height="1" fill="#a8a8a8"/><rect x="0" y="24" width="1" height="1" fill="#a8a8a8"/><rect x="0" y="27" width="1" height="1" fill="#a8a8a8"/><rect x="0" y="30" width="1" height="1" fill="#a8a8a8"/></svg>
<svg class="r" style="left:581px;top:41px;" width="27" height="16" viewBox="0 0 27 16"><defs><linearGradient id="gFF" x1="0" y1="0" x2="0" y2="1"><stop offset="0" stop-color="#a8e4ff"/><stop offset="1" stop-color="#1888e0"/></linearGradient></defs><path d="M1 1L13 8L1 15Z M12 1L25 8L12 15Z" fill="url(#gFF)" stroke="#40a0e0" stroke-width="0.8"/></svg>
<svg class="r" style="left:616px;top:47px;" width="7" height="5" viewBox="0 0 7 5"><path d="M0 0H7L3.5 4Z" fill="#222"/></svg>
<svg class="r" style="left:635px;top:40px;" width="17" height="20" viewBox="0 0 17 20"><defs><linearGradient id="gPs" x1="0" y1="0" x2="1" y2="0"><stop offset="0" stop-color="#30a0f0"/><stop offset="0.5" stop-color="#c8ecff"/><stop offset="1" stop-color="#30a0f0"/></linearGradient></defs><rect x="0.5" y="0.5" width="5" height="17" fill="url(#gPs)" stroke="#40a0e0" stroke-width="0.6"/><rect x="10.5" y="0.5" width="5" height="17" fill="url(#gPs)" stroke="#40a0e0" stroke-width="0.6"/></svg>
<div class="r" style="left:665px;top:30px;width:1px;height:40px;background:#d8d8d8;border-right:1px solid #fcfcfc;width:2px;"></div>
<svg class="r" style="left:668px;top:34px;" width="2" height="34" viewBox="0 0 2 34"><rect x="0" y="0" width="1" height="1" fill="#a8a8a8"/><rect x="0" y="3" width="1" height="1" fill="#a8a8a8"/><rect x="0" y="6" width="1" height="1" fill="#a8a8a8"/><rect x="0" y="9" width="1" height="1" fill="#a8a8a8"/><rect x="0" y="12" width="1" height="1" fill="#a8a8a8"/><rect x="0" y="15" width="1" height="1" fill="#a8a8a8"/><rect x="0" y="18" width="1" height="1" fill="#a8a8a8"/><rect x="0" y="21" width="1" height="1" fill="#a8a8a8"/><rect x="0" y="24" width="1" height="1" fill="#a8a8a8"/><rect x="0" y="27" width="1" height="1" fill="#a8a8a8"/><rect x="0" y="30" width="1" height="1" fill="#a8a8a8"/></svg>
<svg class="r" style="left:673px;top:32px;" width="38" height="36" viewBox="0 0 38 36"><defs><linearGradient id="gPyB" x1="0" y1="0" x2="1" y2="1"><stop offset="0" stop-color="#6a9ad0"/><stop offset="1" stop-color="#2a5a98"/></linearGradient><linearGradient id="gPyY" x1="0" y1="0" x2="1" y2="1"><stop offset="0" stop-color="#ffe870"/><stop offset="1" stop-color="#e0b010"/></linearGradient></defs><path d="M19 2C12 2 12.5 5 12.5 5V9H19.5V10.5H9C9 10.5 4 10 4 17C4 24 8.3 23.8 8.3 23.8H11V20.3C11 20.3 10.9 16 15.2 16H22.5C22.5 16 26.5 16.1 26.5 12.2V5.8C26.5 5.8 27.1 2 19 2Z" fill="url(#gPyB)"/><path d="M21 34C28 34 27.5 31 27.5 31V27H20.5V25.5H31C31 25.5 36 26 36 19C36 12 31.7 12.2 31.7 12.2H29V15.7C29 15.7 29.1 20 24.8 20H17.5C17.5 20 13.5 19.9 13.5 23.8V30.2C13.5 30.2 12.9 34 21 34Z" fill="url(#gPyY)"/><path d="M2 11H20M11 2V20" stroke="#109818" stroke-width="5"/></svg>
<div class="r" style="left:714px;top:30px;width:1px;height:40px;background:#d8d8d8;border-right:1px solid #fcfcfc;width:2px;"></div>
<svg class="r" style="left:722px;top:31px;" width="32" height="38" viewBox="0 0 32 38"><path d="M3 2H22L30 10V36H3Z" fill="#fafafa" stroke="#333" stroke-width="1.2"/><path d="M22 2V10H30" fill="#ddd" stroke="#333" stroke-width="1"/><rect x="8" y="4" width="14" height="4" fill="#b8a8f0"/><path d="M12 14H27M12 19H27M12 24H27M12 29H27" stroke="#999" stroke-width="1.6"/><path d="M7 17V33" stroke="#aaa" stroke-dasharray="1.5 3"/><path d="M0 10H18M9 2V19" stroke="#10a020" stroke-width="5"/></svg>
<div class="r" style="left:759px;top:30px;width:1px;height:40px;background:#d8d8d8;border-right:1px solid #fcfcfc;width:2px;"></div>
<svg class="r" style="left:763px;top:37px;" width="38" height="28" viewBox="0 0 38 28"><path d="M6 22Q10 14 20 14Q24 14 30 8" fill="none" stroke="#8a8a10" stroke-width="4.5"/><path d="M6 22Q10 14 20 14Q24 14 30 8" fill="none" stroke="#c0b020" stroke-width="2.5"/><circle cx="6" cy="22" r="4.8" fill="#444" stroke="#222"/><circle cx="6" cy="22" r="1.8" fill="#ddd"/><circle cx="33" cy="6" r="4.5" fill="#e02020" stroke="#900"/><circle cx="33" cy="6" r="1.8" fill="#fff"/></svg>
<svg class="r" style="left:805px;top:37px;" width="38" height="28" viewBox="0 0 38 28"><path d="M7 22L30 6" fill="none" stroke="#8a8a10" stroke-width="4.5"/><path d="M7 22L30 6" fill="none" stroke="#c0b020" stroke-width="2.5"/><path d="M22 7L29 5L27 12Z" fill="#c0b020" stroke="#8a8a10"/><circle cx="7" cy="22" r="4.8" fill="#444" stroke="#222"/><circle cx="7" cy="22" r="1.8" fill="#ddd"/><circle cx="34" cy="5" r="4.5" fill="#e02020" stroke="#900"/><circle cx="34" cy="5" r="1.8" fill="#fff"/></svg>
<svg class="r" style="left:846px;top:36px;" width="38" height="30" viewBox="0 0 38 30"><path d="M5 23V12Q8 6 20 5L31 7" fill="none" stroke="#8a8a10" stroke-width="4.5"/><path d="M5 23V12Q8 6 20 5L31 7" fill="none" stroke="#c0b020" stroke-width="2.5"/><circle cx="5" cy="25" r="4.8" fill="#444" stroke="#222"/><circle cx="5" cy="25" r="1.8" fill="#ddd"/><circle cx="6" cy="11" r="4.5" fill="#e02020" stroke="#900"/><circle cx="6" cy="11" r="1.8" fill="#fff"/><circle cx="31" cy="7" r="4.5" fill="#e02020" stroke="#900"/><circle cx="31" cy="7" r="1.8" fill="#fff"/></svg>
<svg class="r" style="left:893px;top:32px;" width="21" height="36" viewBox="0 0 21 36"><rect x="1" y="1" width="19" height="4" rx="1" fill="#111"/><rect x="1" y="31" width="19" height="4" rx="1" fill="#111"/><path d="M3 5Q3 14 9 18Q3 22 3 31H18Q18 22 12 18Q18 14 18 5Z" fill="#eef6ff" stroke="#222" stroke-width="1"/><path d="M5 10Q8 15 10.5 17Q13 15 16 10Z" fill="#2a8ae0"/><path d="M4 30Q6 25 10.5 23Q15 25 17 30Z" fill="#1a70d0"/></svg>
<svg class="r" style="left:926px;top:31px;" width="37" height="37" viewBox="0 0 37 37"><defs></defs><circle cx="18" cy="18.5" r="17.5" fill="url(#gInfo)" stroke="#0a2a70" stroke-width="0.6"/><circle cx="18" cy="10" r="2.8" fill="#fff"/><rect x="15.5" y="15" width="5" height="14" fill="#fff"/></svg>
<svg class="r" style="left:969px;top:33px;" width="36" height="34" viewBox="0 0 36 34"><rect x="1" y="1" width="20" height="5" rx="2.5" fill="#b8b8b8" stroke="#666" stroke-width="0.8"/><rect x="14" y="8" width="21" height="5" rx="2.5" fill="#b8b8b8" stroke="#666" stroke-width="0.8"/><rect x="14" y="15" width="21" height="5" rx="2.5" fill="#b8b8b8" stroke="#666" stroke-width="0.8"/><rect x="1" y="22" width="20" height="5" rx="2.5" fill="#b8b8b8" stroke="#666" stroke-width="0.8"/><rect x="1" y="28" width="20" height="5" rx="2.5" fill="#b8b8b8" stroke="#666" stroke-width="0.8"/><path d="M8 8Q8 14 14 14" fill="none" stroke="#e8d890" stroke-width="2.5"/></svg>
<svg class="r" style="left:1013px;top:38px;" width="28" height="22" viewBox="0 0 28 22"><rect x="1" y="1" width="5" height="19" fill="#fafafa" stroke="#555" stroke-width="1.2"/><ellipse cx="18" cy="10.5" rx="8.5" ry="9.5" fill="none" stroke="#555" stroke-width="5"/><ellipse cx="18" cy="10.5" rx="8.5" ry="9.5" fill="none" stroke="#fafafa" stroke-width="2.6"/></svg>
<svg class="r" style="left:1050px;top:32px;" width="35" height="35" viewBox="0 0 35 35"><circle cx="17" cy="17.5" r="16.5" fill="url(#gSync)"/><path d="M8 15A9 9 0 0 1 25 12" fill="none" stroke="#1a1a1a" stroke-width="4"/><path d="M22 7L29 12L21 16Z" fill="#1a1a1a"/><path d="M26 20A9 9 0 0 1 9 23" fill="none" stroke="#1a1a1a" stroke-width="4"/><path d="M12 28L5 23L13 19Z" fill="#1a1a1a"/></svg>
<div class="r" style="left:1088px;top:30px;width:1px;height:40px;background:#d8d8d8;border-right:1px solid #fcfcfc;width:2px;"></div>
<svg class="r" style="left:1091px;top:34px;" width="2" height="34" viewBox="0 0 2 34"><rect x="0" y="0" width="1" height="1" fill="#a8a8a8"/><rect x="0" y="3" width="1" height="1" fill="#a8a8a8"/><rect x="0" y="6" width="1" height="1" fill="#a8a8a8"/><rect x="0" y="9" width="1" height="1" fill="#a8a8a8"/><rect x="0" y="12" width="1" height="1" fill="#a8a8a8"/><rect x="0" y="15" width="1" height="1" fill="#a8a8a8"/><rect x="0" y="18" width="1" height="1" fill="#a8a8a8"/><rect x="0" y="21" width="1" height="1" fill="#a8a8a8"/><rect x="0" y="24" width="1" height="1" fill="#a8a8a8"/><rect x="0" y="27" width="1" height="1" fill="#a8a8a8"/><rect x="0" y="30" width="1" height="1" fill="#a8a8a8"/></svg>
<svg class="r" style="left:1097px;top:32px;" width="36" height="36" viewBox="0 0 36 36"><path d="M6 14L18 9L30 14L30 28L18 34L6 28Z" fill="#f0b820" stroke="#c88810" stroke-width="0.8"/><path d="M6 14L18 19L30 14" fill="none" stroke="#c88810" stroke-width="0.8"/><path d="M18 19V34" stroke="#d89810" stroke-width="0.8"/><path d="M6 14L0 13L8 5L18 9Z" fill="#fcd040" stroke="#c88810" stroke-width="0.8"/><path d="M30 14L36 13L28 5L18 9Z" fill="#fcd040" stroke="#c88810" stroke-width="0.8"/><path d="M6 14L2 20L14 24L18 19Z" fill="#fce070" stroke="#c88810" stroke-width="0.8"/><path d="M30 14L34 20L22 24L18 19Z" fill="#fce070" stroke="#c88810" stroke-width="0.8"/></svg>
<svg class="r" style="left:-1.5px;top:81.5px;" width="11" height="8" viewBox="0 0 11 8"><path d="M0.3 0.5H9.9L5.1 7.2Z" fill="#f4f4f8"/></svg>
<svg class="r" style="left:16px;top:77px;" width="11" height="14" viewBox="0 0 11 14"><path d="M1 3L7 1H10V13H1Z" fill="#e8eefa"/><path d="M5 2H10V13H5Z" fill="#7aa8e0"/></svg>
<div class="t" style="left:31.00px;top:79.29px;font-size:11px;line-height:11px;color:#e4e4f0;transform:scaleX(0.9098);">Ex 01 - Fanuc Welding Station</div>
<svg class="r" style="left:10.9px;top:98.9px;" width="11" height="8" viewBox="0 0 11 8"><path d="M0.3 0.5H9.9L5.1 7.2Z" fill="#f4f4f8"/></svg>
<svg class="r" style="left:25px;top:92px;" width="16" height="16" viewBox="0 0 16 16"><path d="M8 11V1" stroke="#e8e8f0" stroke-width="1.2"/><path d="M8 11L1 13" stroke="#e8e8f0" stroke-width="1.2"/><path d="M8 11L13 15" stroke="#e8e8f0" stroke-width="1.2"/></svg>
<div class="t" style="left:44.00px;top:97.29px;font-size:11px;line-height:11px;color:#e4e4f0;transform:scaleX(0.9142);">Fanuc ARC Mate 120iB/10L Base</div>
<div class="r" style="left:15.5px;top:111px;width:1px;height:36px;background:#7070a8;"></div>
<svg class="r" style="left:24.5px;top:116.5px;" width="11" height="8" viewBox="0 0 11 8"><path d="M0.3 0.5H9.9L5.1 7.2Z" fill="#f4f4f8"/></svg>
<svg class="r" style="left:40px;top:112px;" width="12" height="14" viewBox="0 0 12 14"><path d="M1.5 2.5H10L5 7.5Q9 7 9 10.5Q8.5 12.5 6 12.5" fill="none" stroke="#f07028" stroke-width="2.2" stroke-linejoin="round"/><path d="M1 1.5L3 3" stroke="#f07028" stroke-width="1.5"/></svg>
<div class="t" style="left:58.00px;top:115.19px;font-size:11px;line-height:11px;color:#e4e4f0;transform:scaleX(0.9167);">Fanuc ARC Mate 120iB/10L</div>
<div class="r" style="left:42.5px;top:129px;width:1px;height:9px;background:#7070a8;"></div>
<div class="r" style="left:42.5px;top:137px;width:7px;height:1px;background:#7070a8;"></div>
<svg class="r" style="left:50px;top:130px;" width="17" height="15" viewBox="0 0 17 15"><path d="M6 4L15 10L12 12Z" fill="#a09030"/><path d="M4 7L10 14L7 14Z" fill="#8a7a28"/><circle cx="5.2" cy="6.4" r="4.2" fill="#40c030"/><circle cx="4.4" cy="5.4" r="1.6" fill="#c0f8b0"/></svg>
<div class="t" style="left:71.00px;top:133.19px;font-size:11px;line-height:11px;color:#e4e4f0;transform:scaleX(0.9148);">Daihen OTC weld gun</div>
<svg class="r" style="left:10.9px;top:152.9px;" width="11" height="8" viewBox="0 0 11 8"><path d="M0.3 0.5H9.9L5.1 7.2Z" fill="#f4f4f8"/></svg>
<svg class="r" style="left:25px;top:146px;" width="16" height="16" viewBox="0 0 16 16"><circle cx="5" cy="6" r="4" fill="#60d040"/><path d="M9 12V1" stroke="#e8e8f0" stroke-width="1.2"/><path d="M9 12L1 14" stroke="#e8e8f0" stroke-width="1.2"/><path d="M9 12L14 16" stroke="#e8e8f0" stroke-width="1.2"/></svg>
<div class="t" style="left:44.00px;top:151.19px;font-size:11px;line-height:11px;color:#e4e4f0;transform:scaleX(0.8746);">Table</div>
<div class="r" style="left:15.5px;top:165px;width:1px;height:36px;background:#7070a8;"></div>
<div class="r" style="left:29.5px;top:165px;width:1px;height:10px;background:#7070a8;"></div>
<div class="r" style="left:29.5px;top:174px;width:7px;height:1px;background:#7070a8;"></div>
<svg class="r" style="left:37px;top:166px;" width="16" height="16" viewBox="0 0 16 16"><circle cx="6" cy="10" r="5" fill="#808088"/><circle cx="6" cy="10" r="3" fill="#b0b0b8"/><circle cx="6" cy="10" r="1.3" fill="#606068"/><path d="M6 10L14 2" stroke="#e8e8f0" stroke-width="1.2"/></svg>
<div class="t" style="left:57.40px;top:169.09px;font-size:11px;line-height:11px;color:#e4e4f0;transform:scaleX(0.9304);">Home</div>
<div class="r" style="left:29.5px;top:175px;width:1px;height:17px;background:#7070a8;"></div>
<div class="r" style="left:29.5px;top:191px;width:7px;height:1px;background:#7070a8;"></div>
<svg class="r" style="left:38px;top:184px;" width="15" height="14" viewBox="0 0 15 14"><path d="M1 4L6 1H14V9L9 13H1Z" fill="#4a90e0"/><path d="M1 4H9V13H1Z" fill="#8cc4f4"/><path d="M1 4L6 1H14L9 4Z" fill="#d0e8fc"/></svg>
<div class="t" style="left:57.40px;top:187.19px;font-size:11px;line-height:11px;color:#e4e4f0;transform:scaleX(0.8990);">Weld 1</div>
<svg class="r" style="left:13.5px;top:205.5px;" width="8" height="11" viewBox="0 0 8 11"><path d="M0.5 0.3L7.3 5.2L0.5 10.1Z" fill="#f4f4f8"/></svg>
<svg class="r" style="left:24px;top:203px;" width="16" height="16" viewBox="0 0 16 16"><path d="M8 11V1" stroke="#3040ff" stroke-width="1.5"/><path d="M8 11L1 13" stroke="#e03040" stroke-width="1.5"/><path d="M8 11L13 15" stroke="#30c080" stroke-width="1.5"/></svg>
<div class="t" style="left:44.20px;top:205.09px;font-size:11px;line-height:11px;color:#e4e4f0;transform:scaleX(0.9500);">World</div>
<svg class="r" style="left:13.5px;top:223.5px;" width="8" height="11" viewBox="0 0 8 11"><path d="M0.5 0.3L7.3 5.2L0.5 10.1Z" fill="#f4f4f8"/></svg>
<svg class="r" style="left:26px;top:220px;" width="13" height="16" viewBox="0 0 13 16"><path d="M1 1H8L12 5V15H1Z" fill="#dcdce4" stroke="#f0f0f8" stroke-width="0.8"/><path d="M8 1V5H12" fill="#b8b8d0"/></svg>
<div class="t" style="left:44.20px;top:223.19px;font-size:11px;line-height:11px;color:#e4e4f0;transform:scaleX(0.9036);">Go_Home</div>
<div class="r" style="left:15.5px;top:237px;width:1px;height:29px;background:#7070a8;"></div>
<div class="r" style="left:15.5px;top:246px;width:8px;height:1px;background:#7070a8;"></div>
<div class="r" style="left:15.5px;top:265px;width:8px;height:1px;background:#7070a8;"></div>
<svg class="r" style="left:26px;top:238px;" width="15" height="17" viewBox="0 0 15 17"><path d="M1 1H13L9 5V9H5V5Z" fill="#505058"/><circle cx="8.5" cy="12" r="4.5" fill="#20c040"/><path d="M6 12L8 14L11 10" stroke="#fff" stroke-width="1.5" fill="none"/></svg>
<div class="t" style="left:44.20px;top:241.19px;font-size:11px;line-height:11px;color:#e4e4f0;transform:scaleX(0.9305);">Weld 1 Settings</div>
<svg class="r" style="left:26px;top:257px;" width="13" height="16" viewBox="0 0 13 16"><path d="M1 1H8L12 5V15H1Z" fill="#dcdce4" stroke="#f0f0f8" stroke-width="0.8"/><path d="M8 1V5H12" fill="#b8b8d0"/></svg>
<div class="t" style="left:44.20px;top:259.19px;font-size:11px;line-height:11px;color:#e4e4f0;transform:scaleX(0.9170);">Weld</div>
<div class="r" style="left:859px;top:137px;width:369px;height:519px;background:#f0f0f0;border:1px solid #4a6ab8;border-right-color:#4a70c0;border-bottom-color:#7898b8;"></div>
<div class="r" style="left:860px;top:137px;width:367px;height:20px;background:#ffffff;"></div>
<svg class="r" style="left:865px;top:141px;" width="12" height="12" viewBox="0 0 12 12"><path d="M0.5 0.5H11.5L8 4V11H4V4Z" fill="#555" stroke="#222" stroke-width="0.6"/><path d="M5 4V10" stroke="#ccc" stroke-width="0.8"/></svg>
<div class="t" style="left:880.00px;top:142.23px;font-size:8.7px;line-height:8.7px;color:#222;transform:scaleX(0.8912);-webkit-text-stroke:0.2px #222;">Curve Follow Project: Weld 1 Settings</div>
<div class="r" style="left:1148px;top:146.5px;width:7px;height:1px;background:#333;"></div>
<svg class="r" style="left:1178px;top:143px;" width="8" height="8" viewBox="0 0 8 8"><rect x="0.5" y="0.5" width="7" height="7" fill="none" stroke="#333" stroke-width="0.9"/></svg>
<svg class="r" style="left:1208px;top:143px;" width="9" height="8" viewBox="0 0 9 8"><path d="M0.5 0.5L8 7.5M8 0.5L0.5 7.5" stroke="#333" stroke-width="0.9"/></svg>
<div class="t" style="left:869.00px;top:167.97px;font-size:8.3px;line-height:8.3px;color:#141414;transform:scaleX(0.8996);-webkit-text-stroke:0.2px #141414;">Robot:</div>
<div class="t" style="left:869.00px;top:183.67px;font-size:8.3px;line-height:8.3px;color:#141414;transform:scaleX(0.8768);-webkit-text-stroke:0.2px #141414;">Reference:</div>
<div class="t" style="left:869.00px;top:198.67px;font-size:8.3px;line-height:8.3px;color:#141414;transform:scaleX(0.9126);-webkit-text-stroke:0.2px #141414;">Tool:</div>
<div class="t" style="left:869.00px;top:209.97px;font-size:8.3px;line-height:8.3px;color:#141414;transform:scaleX(0.9128);-webkit-text-stroke:0.2px #141414;">Object:</div>
<div class="t" style="left:906.00px;top:209.97px;font-size:8.3px;line-height:8.3px;color:#141414;transform:scaleX(0.8566);-webkit-text-stroke:0.2px #141414;">Weld 1</div>
<div class="t" style="left:869.00px;top:219.37px;font-size:8.3px;line-height:8.3px;color:#141414;transform:scaleX(0.8203);-webkit-text-stroke:0.2px #141414;">Program:</div>
<div class="t" style="left:906.00px;top:219.37px;font-size:8.3px;line-height:8.3px;color:#141414;transform:scaleX(0.7995);-webkit-text-stroke:0.2px #141414;">Weld</div>
<div class="r" style="left:906px;top:164px;width:117px;height:15px;background:#e4e4e4;border:1px solid #bcbcbc;"></div>
<div class="t" style="left:921.40px;top:167.97px;font-size:8.3px;line-height:8.3px;color:#141414;transform:scaleX(0.8320);-webkit-text-stroke:0.2px #141414;">Fanuc ARC Mate 120iB/10L</div>
<svg class="r" style="left:1014px;top:169.5px;" width="7" height="5" viewBox="0 0 7 5"><path d="M0.5 0.5L3.5 3.5L6.5 0.5" fill="none" stroke="#505050" stroke-width="0.9"/></svg>
<div class="r" style="left:906px;top:180px;width:117px;height:14px;background:#e4e4e4;border:1px solid #bcbcbc;"></div>
<div class="t" style="left:921.40px;top:182.97px;font-size:8.3px;line-height:8.3px;color:#141414;transform:scaleX(0.8870);-webkit-text-stroke:0.2px #141414;">Table</div>
<svg class="r" style="left:1014px;top:185.0px;" width="7" height="5" viewBox="0 0 7 5"><path d="M0.5 0.5L3.5 3.5L6.5 0.5" fill="none" stroke="#505050" stroke-width="0.9"/></svg>
<div class="r" style="left:906px;top:195.5px;width:117px;height:14.0px;background:#e4e4e4;border:1px solid #bcbcbc;"></div>
<div class="t" style="left:921.40px;top:198.47px;font-size:8.3px;line-height:8.3px;color:#141414;transform:scaleX(0.8401);-webkit-text-stroke:0.2px #141414;">Daihen OTC weld gun</div>
<svg class="r" style="left:1014px;top:200.5px;" width="7" height="5" viewBox="0 0 7 5"><path d="M0.5 0.5L3.5 3.5L6.5 0.5" fill="none" stroke="#505050" stroke-width="0.9"/></svg>
<svg class="r" style="left:909px;top:166px;" width="12" height="12" viewBox="0 0 12 12"><path d="M2 1.5H10L6.5 4.5Q9.5 5.5 9 8.5L3 9Q5 6 3.5 4Z" fill="#e86a20"/><path d="M3 7H9.5V10.5H3.5Z" fill="#1a1410"/><path d="M2 1H10V2.5H2Z" fill="#b84a10"/></svg>
<svg class="r" style="left:908px;top:181px;" width="13" height="12" viewBox="0 0 13 12"><circle cx="4" cy="4.5" r="2.8" fill="#40c030"/><circle cx="3.4" cy="3.8" r="1" fill="#b0f0a0"/><path d="M6.5 10V0.5" stroke="#888" stroke-width="0.8"/><path d="M6.5 10L1 11M6.5 10L10 12" stroke="#9090b0" stroke-width="0.8"/></svg>
<svg class="r" style="left:908px;top:196px;" width="13" height="12" viewBox="0 0 13 12"><path d="M4 3L11.5 10L9 11.5L2.5 6Z" fill="#6a6a20"/><path d="M5 5L10 9" stroke="#c0b040" stroke-width="0.8"/><circle cx="3.8" cy="4" r="2.8" fill="#38b828"/><circle cx="3.2" cy="3.3" r="1" fill="#a8f098"/></svg>
<svg class="r" style="left:1049px;top:168px;" width="10" height="10" viewBox="0 0 10 10"><rect x="0.5" y="0.5" width="9" height="9" fill="#fff" stroke="#555" stroke-width="0.9"/><path d="M2 4.8L3.78 6.8L7.2 2" fill="none" stroke="#333" stroke-width="1"/></svg>
<div class="t" style="left:1061.30px;top:167.97px;font-size:8.3px;line-height:8.3px;color:#141414;transform:scaleX(0.8816);-webkit-text-stroke:0.2px #141414;">Aproach/Retract each curve</div>
<div class="t" style="left:1049.00px;top:181.17px;font-size:8.3px;line-height:8.3px;color:#141414;transform:scaleX(0.8604);-webkit-text-stroke:0.2px #141414;">Operation speed (mm/s)</div>
<div class="r" style="left:1135px;top:178.5px;width:85px;height:13px;background:#ffffff;border:1px solid #b8b8b8;"></div>
<div class="t" style="left:1138.00px;top:181.17px;font-size:8.3px;line-height:8.3px;color:#141414;transform:scaleX(0.8666);-webkit-text-stroke:0.2px #141414;">50.000</div>
<svg class="r" style="left:1209px;top:179px;" width="10" height="12" viewBox="0 0 10 12"><rect x="0" y="0.5" width="9.5" height="11" fill="#e8e8e8" stroke="#c8c8c8" stroke-width="0.6"/><path d="M2.5 5.0L4.75 2.5L7 5.0Z M2.5 7.0L4.75 9.5L7 7.0Z" fill="#303030"/></svg>
<div class="t" style="left:1049.00px;top:195.57px;font-size:8.3px;line-height:8.3px;color:#141414;transform:scaleX(0.8494);-webkit-text-stroke:0.2px #141414;">Join Curve Tolerance (mm)</div>
<div class="r" style="left:1135px;top:192.5px;width:85px;height:13px;background:#ffffff;border:1px solid #b8b8b8;"></div>
<div class="t" style="left:1138.00px;top:195.57px;font-size:8.3px;line-height:8.3px;color:#141414;transform:scaleX(0.8666);-webkit-text-stroke:0.2px #141414;">0.500</div>
<svg class="r" style="left:1209px;top:193px;" width="10" height="12" viewBox="0 0 10 12"><rect x="0" y="0.5" width="9.5" height="11" fill="#e8e8e8" stroke="#c8c8c8" stroke-width="0.6"/><path d="M2.5 5.0L4.75 2.5L7 5.0Z M2.5 7.0L4.75 9.5L7 7.0Z" fill="#303030"/></svg>
<div class="t" style="left:1051.00px;top:209.97px;font-size:8.3px;line-height:8.3px;color:#141414;transform:scaleX(0.8725);-webkit-text-stroke:0.2px #141414;">Approach</div>
<div class="r" style="left:1107.4px;top:207.4px;width:54.4px;height:13.199999999999989px;background:#e1e1e1;border:1px solid #c8c8c8;"></div>
<div class="t" style="left:1128.35px;top:209.97px;font-size:8.3px;line-height:8.3px;color:#141414;transform:scaleX(0.8464);-webkit-text-stroke:0.2px #141414;">Add</div>
<div class="r" style="left:1163.2px;top:207.4px;width:54px;height:13.199999999999989px;background:#e1e1e1;border:1px solid #c8c8c8;"></div>
<div class="t" style="left:1176.95px;top:209.97px;font-size:8.3px;line-height:8.3px;color:#141414;transform:scaleX(0.8574);-webkit-text-stroke:0.2px #141414;">Remove</div>
<div class="r" style="left:1049px;top:221.8px;width:171px;height:46.599999999999966px;background:#fff;border:1px solid #a8a8a8;"></div>
<div class="r" style="left:1050px;top:222.8px;width:66px;height:15px;background:#fff;"></div>
<div class="t" style="left:1073.50px;top:225.97px;font-size:8.3px;line-height:8.3px;color:#141414;transform:scaleX(0.9633);-webkit-text-stroke:0.2px #141414;">mode</div>
<div class="t" style="left:1120.00px;top:225.97px;font-size:8.3px;line-height:8.3px;color:#141414;transform:scaleX(0.9878);-webkit-text-stroke:0.2px #141414;">value (mm)</div>
<div class="r" style="left:1050px;top:238.3px;width:66px;height:14px;background:#e1e1e1;border:1px solid #c8c8c8;"></div>
<div class="t" style="left:1053.00px;top:240.97px;font-size:8.3px;line-height:8.3px;color:#141414;transform:scaleX(0.9843);-webkit-text-stroke:0.2px #141414;">normal (n+)</div>
<svg class="r" style="left:1107px;top:244px;" width="7" height="5" viewBox="0 0 7 5"><path d="M0.5 0.5L3.5 3.5L6.5 0.5" fill="none" stroke="#505050" stroke-width="0.9"/></svg>
<div class="t" style="left:1131.00px;top:240.97px;font-size:8.3px;line-height:8.3px;color:#141414;transform:scaleX(0.9147);-webkit-text-stroke:0.2px #141414;">100.0</div>
<div class="r" style="left:1116px;top:252.3px;width:48px;height:1px;background:#f0f0f0;"></div>
<div class="r" style="left:1164px;top:222.8px;width:1px;height:30px;background:#f0f0f0;"></div>
<div class="t" style="left:1051.00px;top:272.97px;font-size:8.3px;line-height:8.3px;color:#141414;transform:scaleX(0.9158);-webkit-text-stroke:0.2px #141414;">Retract</div>
<div class="r" style="left:1107.4px;top:270.6px;width:54.4px;height:13.199999999999989px;background:#e1e1e1;border:1px solid #c8c8c8;"></div>
<div class="t" style="left:1128.35px;top:272.97px;font-size:8.3px;line-height:8.3px;color:#141414;transform:scaleX(0.8464);-webkit-text-stroke:0.2px #141414;">Add</div>
<div class="r" style="left:1163.2px;top:270.6px;width:54px;height:13.199999999999989px;background:#e1e1e1;border:1px solid #c8c8c8;"></div>
<div class="t" style="left:1176.95px;top:272.97px;font-size:8.3px;line-height:8.3px;color:#141414;transform:scaleX(0.8574);-webkit-text-stroke:0.2px #141414;">Remove</div>
<div class="r" style="left:1049px;top:285.3px;width:171px;height:46.30000000000001px;background:#fff;border:1px solid #a8a8a8;"></div>
<div class="r" style="left:1050px;top:286.3px;width:66px;height:15px;background:#fff;"></div>
<div class="t" style="left:1073.50px;top:289.27px;font-size:8.3px;line-height:8.3px;color:#141414;transform:scaleX(0.9633);-webkit-text-stroke:0.2px #141414;">mode</div>
<div class="t" style="left:1120.00px;top:289.27px;font-size:8.3px;line-height:8.3px;color:#141414;transform:scaleX(0.9878);-webkit-text-stroke:0.2px #141414;">value (mm)</div>
<div class="r" style="left:1050px;top:301.8px;width:66px;height:14px;background:#e1e1e1;border:1px solid #c8c8c8;"></div>
<div class="t" style="left:1053.00px;top:304.47px;font-size:8.3px;line-height:8.3px;color:#141414;transform:scaleX(0.9843);-webkit-text-stroke:0.2px #141414;">normal (n+)</div>
<svg class="r" style="left:1107px;top:307.5px;" width="7" height="5" viewBox="0 0 7 5"><path d="M0.5 0.5L3.5 3.5L6.5 0.5" fill="none" stroke="#505050" stroke-width="0.9"/></svg>
<div class="t" style="left:1131.00px;top:304.47px;font-size:8.3px;line-height:8.3px;color:#141414;transform:scaleX(0.9147);-webkit-text-stroke:0.2px #141414;">100.0</div>
<div class="r" style="left:1116px;top:315.8px;width:48px;height:1px;background:#f0f0f0;"></div>
<div class="r" style="left:1164px;top:286.3px;width:1px;height:30px;background:#f0f0f0;"></div>
<svg class="r" style="left:869px;top:257px;" width="10" height="10" viewBox="0 0 10 10"><rect x="0.5" y="0.5" width="9" height="9" fill="#fff" stroke="#555" stroke-width="0.9"/><path d="M2 4.8L3.78 6.8L7.2 2" fill="none" stroke="#333" stroke-width="1"/></svg>
<div class="t" style="left:881.00px;top:257.27px;font-size:8.3px;line-height:8.3px;color:#141414;transform:scaleX(0.8549);-webkit-text-stroke:0.2px #141414;">Visible toolpath</div>
<div class="r" style="left:869.3px;top:271.7px;width:153.70000000000005px;height:59.69999999999999px;border:1px solid #dcdcdc;box-shadow:inset 1px 1px 0 #fafafa;"></div>
<div class="r" style="left:873px;top:269px;width:38px;height:8px;background:#f0f0f0;"></div>
<div class="t" style="left:875.00px;top:268.47px;font-size:8.3px;line-height:8.3px;color:#141414;transform:scaleX(0.8828);-webkit-text-stroke:0.2px #141414;">Path input</div>
<div class="r" style="left:873px;top:281.7px;width:72px;height:13px;background:#e4e4e4;border:1px solid #bcbcbc;"></div>
<div class="t" style="left:876.00px;top:284.37px;font-size:8.3px;line-height:8.3px;color:#141414;transform:scaleX(0.8539);-webkit-text-stroke:0.2px #141414;">Select curve</div>
<svg class="r" style="left:935px;top:286px;" width="7" height="5" viewBox="0 0 7 5"><path d="M0.5 0.5L3.5 3.5L6.5 0.5" fill="none" stroke="#505050" stroke-width="0.9"/></svg>
<div class="r" style="left:948.6px;top:281px;width:69.69999999999993px;height:14.399999999999977px;background:#e1e1e1;border:1px solid #b4b4b4;"></div>
<div class="t" style="left:964.00px;top:284.37px;font-size:8.3px;line-height:8.3px;color:#141414;transform:scaleX(0.8539);-webkit-text-stroke:0.2px #141414;">Select curve</div>
<div class="t" style="left:873.00px;top:299.87px;font-size:8.3px;line-height:8.3px;color:#141414;transform:scaleX(0.8849);-webkit-text-stroke:0.2px #141414;">Path points: 82</div>
<div class="r" style="left:874px;top:312px;width:144px;height:13.699999999999989px;background:#e1e1e1;border:1px solid #b4b4b4;"></div>
<div class="t" style="left:920.50px;top:314.97px;font-size:8.3px;line-height:8.3px;color:#141414;transform:scaleX(0.8570);-webkit-text-stroke:0.2px #141414;">Program Events</div>
<div class="t" style="left:866.60px;top:347.27px;font-size:8.3px;line-height:8.3px;color:#141414;transform:scaleX(0.9198);-webkit-text-stroke:0.2px #141414;">Path to tool offset:</div>
<div class="r" style="left:930.6px;top:338px;width:227px;height:12px;background:#e4e4e4;border:1px solid #bcbcbc;"></div>
<div class="t" style="left:933.00px;top:341.23px;font-size:7.4px;line-height:7.4px;color:#1a1a1a;font-family:'Liberation Mono',monospace;transform:scaleX(0.8985);-webkit-text-stroke:0.2px #1a1a1a;">[X,Y,Z]mm | Rot[X,Y ,Z  ]deg - Fanuc/Motoman (default</div>
<svg class="r" style="left:1150px;top:342px;" width="7" height="5" viewBox="0 0 7 5"><path d="M0.5 0.5L3.5 3.5L6.5 0.5" fill="none" stroke="#505050" stroke-width="0.9"/></svg>
<div class="r" style="left:1161.3px;top:337.4px;width:17.0px;height:13.200000000000045px;background:#e8e8e8;border:1px solid #cfcfcf;"></div>
<svg class="r" style="left:1165.3px;top:340.4px;" width="9" height="8.200000000000045" viewBox="0 0 9 8.200000000000045"><rect x="1" y="0.5" width="7" height="8" fill="#f4f4f4" stroke="#c8c8c8" stroke-width="0.8"/></svg>
<div class="r" style="left:1181.3px;top:337.4px;width:17.0px;height:13.200000000000045px;background:#e4e4e4;border:1px solid #c4c4c4;"></div>
<svg class="r" style="left:1185.3px;top:339.4px;" width="10" height="9.200000000000045" viewBox="0 0 10 9.200000000000045"><rect x="0.5" y="1" width="6" height="9" fill="#e8a040"/><rect x="3" y="2.5" width="6" height="8" fill="#fcfcfc" stroke="#ddd" stroke-width="0.5"/></svg>
<div class="r" style="left:1201.3px;top:337.4px;width:17.0px;height:13.200000000000045px;background:#e4e4e4;border:1px solid #c4c4c4;"></div>
<svg class="r" style="left:1205.3px;top:340.4px;" width="10" height="8.200000000000045" viewBox="0 0 10 8.200000000000045"><path d="M0 1.2H9M0 4.5H9M0 7.8H9" stroke="#111" stroke-width="1.6"/></svg>
<div class="r" style="left:930.6px;top:352px;width:289.4px;height:13.6px;background:#fff;border:1px solid #2e7ad0;"></div>
<div class="t" style="left:933.00px;top:355.93px;font-size:7.4px;line-height:7.4px;color:#1a1a1a;font-family:'Liberation Mono',monospace;transform:scaleX(0.8985);-webkit-text-stroke:0.2px #1a1a1a;">rotz(0)</div>
<div class="r" style="left:957px;top:354px;width:1px;height:10px;background:#111;"></div>
<div class="t" style="left:866.60px;top:371.97px;font-size:8.3px;line-height:8.3px;color:#141414;transform:scaleX(0.8638);-webkit-text-stroke:0.2px #141414;">Select algorithm:</div>
<div class="r" style="left:923px;top:369.4px;width:119.6px;height:12.4px;background:#e4e4e4;border:1px solid #bcbcbc;"></div>
<div class="t" style="left:925.00px;top:371.97px;font-size:8.3px;line-height:8.3px;color:#141414;transform:scaleX(0.8503);-webkit-text-stroke:0.2px #141414;">Minimum tool orientation change</div>
<svg class="r" style="left:1032px;top:373.5px;" width="7" height="5" viewBox="0 0 7 5"><path d="M0.5 0.5L3.5 3.5L6.5 0.5" fill="none" stroke="#505050" stroke-width="0.9"/></svg>
<div class="r" style="left:1045px;top:368px;width:48.700000000000045px;height:14.199999999999989px;background:#e1e1e1;border:1px solid #b4b4b4;"></div>
<div class="t" style="left:1059.80px;top:372.27px;font-size:8.3px;line-height:8.3px;color:#141414;transform:scaleX(0.8578);-webkit-text-stroke:0.2px #141414;">Teach</div>
<div class="r" style="left:1097px;top:368px;width:17.7px;height:15px;background:#cce4f7;border:1px solid #3c8ee0;"></div>
<div class="r" style="left:1101px;top:374.5px;width:9.5px;height:2.6px;background:#e03838;"></div>
<div class="r" style="left:1120.9px;top:368px;width:98.5px;height:15px;background:#cce4f7;border:1px solid #3c8ee0;"></div>
<svg class="r" style="left:1123px;top:370px;" width="11" height="11" viewBox="0 0 11 11"><defs><radialGradient id="gGb" cx="0.4" cy="0.35" r="0.6"><stop offset="0" stop-color="#90e050"/><stop offset="1" stop-color="#30a010"/></radialGradient></defs><circle cx="5.5" cy="5.5" r="4.8" fill="url(#gGb)"/></svg>
<div class="t" style="left:1136.00px;top:372.27px;font-size:8.3px;line-height:8.3px;color:#141414;transform:scaleX(0.8911);-webkit-text-stroke:0.2px #141414;">Show preferred tool path</div>
<div class="r" style="left:867.6px;top:391px;width:352.4px;height:33.39999999999998px;border:1px solid #dcdcdc;box-shadow:inset 1px 1px 0 #fafafa;"></div>
<div class="r" style="left:871px;top:387px;width:78px;height:8px;background:#f0f0f0;"></div>
<div class="t" style="left:873.00px;top:387.67px;font-size:8.3px;line-height:8.3px;color:#141414;transform:scaleX(0.9912);-webkit-text-stroke:0.2px #141414;">Preferred orientation</div>
<div class="t" style="left:873.50px;top:407.57px;font-size:8.3px;line-height:8.3px;color:#141414;transform:scaleX(0.8710);-webkit-text-stroke:0.2px #141414;">Preferred tool X axis</div>
<div class="r" style="left:943px;top:405.3px;width:47px;height:11.5px;background:#fbb4ae;"></div>
<div class="t" style="left:956.00px;top:407.57px;font-size:8.3px;line-height:8.3px;color:#141414;transform:scaleX(0.8395);-webkit-text-stroke:0.2px #141414;">90.00 deg</div>
<svg class="r" style="left:990px;top:405px;" width="10" height="12" viewBox="0 0 10 12"><rect x="0" y="0.5" width="9.5" height="11" fill="#f0f0f0" stroke="#c8c8c8" stroke-width="0.6"/><path d="M2.5 5.0L4.75 2.5L7 5.0Z M2.5 7.0L4.75 9.5L7 7.0Z" fill="#303030"/></svg>
<div class="r" style="left:1002px;top:405.3px;width:47.6px;height:11.5px;background:#b4f4b4;"></div>
<div class="t" style="left:1012.00px;top:407.57px;font-size:8.3px;line-height:8.3px;color:#141414;transform:scaleX(0.8425);-webkit-text-stroke:0.2px #141414;">180.00 deg</div>
<svg class="r" style="left:1050px;top:405px;" width="10" height="12" viewBox="0 0 10 12"><rect x="0" y="0.5" width="9.5" height="11" fill="#f0f0f0" stroke="#c8c8c8" stroke-width="0.6"/><path d="M2.5 5.0L4.75 2.5L7 5.0Z M2.5 7.0L4.75 9.5L7 7.0Z" fill="#303030"/></svg>
<div class="r" style="left:1061.3px;top:403.5px;width:17.0px;height:14.699999999999989px;background:#e8e8e8;border:1px solid #cfcfcf;"></div>
<svg class="r" style="left:1065.3px;top:406.5px;" width="9" height="9.699999999999989" viewBox="0 0 9 9.699999999999989"><rect x="1" y="0.5" width="7" height="8" fill="#f4f4f4" stroke="#c8c8c8" stroke-width="0.8"/></svg>
<div class="r" style="left:1081.3px;top:403.5px;width:17.0px;height:14.699999999999989px;background:#e4e4e4;border:1px solid #c4c4c4;"></div>
<svg class="r" style="left:1085.3px;top:405.5px;" width="10" height="10.699999999999989" viewBox="0 0 10 10.699999999999989"><rect x="0.5" y="1" width="6" height="9" fill="#e8a040"/><rect x="3" y="2.5" width="6" height="8" fill="#fcfcfc" stroke="#ddd" stroke-width="0.5"/></svg>
<div class="r" style="left:1103.2px;top:403.5px;width:25.299999999999955px;height:14.5px;background:#e1e1e1;border:1px solid #b4b4b4;"></div>
<div class="t" style="left:1111.80px;top:407.27px;font-size:8.3px;line-height:8.3px;color:#141414;transform:scaleX(0.9638);-webkit-text-stroke:0.2px #141414;">-X</div>
<div class="r" style="left:1134px;top:403.5px;width:25.4px;height:14.5px;background:#e2f0fc;border:1px solid #6c94c0;border-radius:1px;"></div>
<div class="t" style="left:1142.20px;top:407.27px;font-size:8.3px;line-height:8.3px;color:#141414;transform:scaleX(0.9075);-webkit-text-stroke:0.2px #141414;">+Z</div>
<div class="r" style="left:1164.7px;top:403.5px;width:25.0px;height:14.5px;background:#e1e1e1;border:1px solid #b4b4b4;"></div>
<div class="t" style="left:1170.20px;top:407.27px;font-size:8.3px;line-height:8.3px;color:#141414;transform:scaleX(0.9197);-webkit-text-stroke:0.2px #141414;">Def.</div>
<svg class="r" style="left:1198px;top:406px;" width="12" height="11" viewBox="0 0 12 11"><path d="M0.5 5.5H11M5.75 0.5V10.5" stroke="#1a6ad0" stroke-width="2.6"/></svg>
<svg class="r" style="left:1144px;top:411px;" width="10" height="14" viewBox="0 0 10 14"><path d="M0.5 0.5V10.5L3 8.3L5 12.3L6.8 11.4L4.9 7.6H8Z" fill="#fff" stroke="#111" stroke-width="0.8"/></svg>
<div class="t" style="left:867.60px;top:441.17px;font-size:8.3px;line-height:8.3px;color:#141414;transform:scaleX(0.8904);-webkit-text-stroke:0.2px #141414;">Frame offset:</div>
<div class="r" style="left:912.6px;top:431.5px;width:244.8px;height:12.8px;background:#e4e4e4;border:1px solid #bcbcbc;"></div>
<div class="t" style="left:915.50px;top:435.63px;font-size:7.4px;line-height:7.4px;color:#1a1a1a;font-family:'Liberation Mono',monospace;transform:scaleX(0.8985);-webkit-text-stroke:0.2px #1a1a1a;">[X,Y,Z]mm | Rot[X,Y ,Z  ]deg - Fanuc/Motoman (default)</div>
<svg class="r" style="left:1149px;top:435.5px;" width="7" height="5" viewBox="0 0 7 5"><path d="M0.5 0.5L3.5 3.5L6.5 0.5" fill="none" stroke="#505050" stroke-width="0.9"/></svg>
<div class="r" style="left:1160.3px;top:431.5px;width:17.0px;height:13.5px;background:#e8e8e8;border:1px solid #cfcfcf;"></div>
<svg class="r" style="left:1164.3px;top:434.5px;" width="9" height="8.5" viewBox="0 0 9 8.5"><rect x="1" y="0.5" width="7" height="8" fill="#f4f4f4" stroke="#c8c8c8" stroke-width="0.8"/></svg>
<div class="r" style="left:1180.3px;top:431.5px;width:17.0px;height:13.5px;background:#e4e4e4;border:1px solid #c4c4c4;"></div>
<svg class="r" style="left:1184.3px;top:433.5px;" width="10" height="9.5" viewBox="0 0 10 9.5"><rect x="0.5" y="1" width="6" height="9" fill="#e8a040"/><rect x="3" y="2.5" width="6" height="8" fill="#fcfcfc" stroke="#ddd" stroke-width="0.5"/></svg>
<div class="r" style="left:1200.3px;top:431.5px;width:17.0px;height:13.5px;background:#e4e4e4;border:1px solid #c4c4c4;"></div>
<svg class="r" style="left:1204.3px;top:434.5px;" width="10" height="8.5" viewBox="0 0 10 8.5"><path d="M0 1.2H9M0 4.5H9M0 7.8H9" stroke="#111" stroke-width="1.6"/></svg>
<div class="r" style="left:912.6px;top:446.5px;width:307.4px;height:13.2px;background:#ffffff;border:1px solid #b8b8b8;"></div>
<div class="t" style="left:915.50px;top:450.33px;font-size:7.4px;line-height:7.4px;color:#1a1a1a;font-family:'Liberation Mono',monospace;transform:scaleX(0.8985);-webkit-text-stroke:0.2px #1a1a1a;">rotZ(0)</div>
<div class="t" style="left:868.00px;top:471.47px;font-size:8.3px;line-height:8.3px;color:#141414;transform:scaleX(0.9003);-webkit-text-stroke:0.2px #141414;">Tool offset:</div>
<div class="r" style="left:912.6px;top:461.9px;width:244.8px;height:12.8px;background:#e4e4e4;border:1px solid #bcbcbc;"></div>
<div class="t" style="left:915.50px;top:465.83px;font-size:7.4px;line-height:7.4px;color:#1a1a1a;font-family:'Liberation Mono',monospace;transform:scaleX(0.8985);-webkit-text-stroke:0.2px #1a1a1a;">[X,Y,Z]mm | Rot[X,Y ,Z  ]deg - Fanuc/Motoman (default)</div>
<svg class="r" style="left:1149px;top:466px;" width="7" height="5" viewBox="0 0 7 5"><path d="M0.5 0.5L3.5 3.5L6.5 0.5" fill="none" stroke="#505050" stroke-width="0.9"/></svg>
<div class="r" style="left:1160.3px;top:462px;width:17.0px;height:13px;background:#e8e8e8;border:1px solid #cfcfcf;"></div>
<svg class="r" style="left:1164.3px;top:465px;" width="9" height="8" viewBox="0 0 9 8"><rect x="1" y="0.5" width="7" height="8" fill="#f4f4f4" stroke="#c8c8c8" stroke-width="0.8"/></svg>
<div class="r" style="left:1180.3px;top:462px;width:17.0px;height:13px;background:#e4e4e4;border:1px solid #c4c4c4;"></div>
<svg class="r" style="left:1184.3px;top:464px;" width="10" height="9" viewBox="0 0 10 9"><rect x="0.5" y="1" width="6" height="9" fill="#e8a040"/><rect x="3" y="2.5" width="6" height="8" fill="#fcfcfc" stroke="#ddd" stroke-width="0.5"/></svg>
<div class="r" style="left:1200.3px;top:462px;width:17.0px;height:13px;background:#e4e4e4;border:1px solid #c4c4c4;"></div>
<svg class="r" style="left:1204.3px;top:465px;" width="10" height="8" viewBox="0 0 10 8"><path d="M0 1.2H9M0 4.5H9M0 7.8H9" stroke="#111" stroke-width="1.6"/></svg>
<div class="r" style="left:912.6px;top:476.6px;width:307.4px;height:12.4px;background:#ffffff;border:1px solid #b8b8b8;"></div>
<div class="t" style="left:915.50px;top:480.53px;font-size:7.4px;line-height:7.4px;color:#1a1a1a;font-family:'Liberation Mono',monospace;transform:scaleX(0.8985);-webkit-text-stroke:0.2px #1a1a1a;">rotX(0)*rotY(0)</div>
<div class="r" style="left:867.6px;top:498px;width:352.4px;height:50px;border:1px solid #dcdcdc;box-shadow:inset 1px 1px 0 #fafafa;"></div>
<div class="r" style="left:871px;top:494px;width:82px;height:8px;background:#f0f0f0;"></div>
<div class="t" style="left:873.00px;top:494.57px;font-size:8.3px;line-height:8.3px;color:#141414;transform:scaleX(0.8627);-webkit-text-stroke:0.2px #141414;">Optimization parameters</div>
<div class="r" style="left:874.7px;top:510.4px;width:48.5px;height:13.700000000000045px;background:#e1e1e1;border:1px solid #b4b4b4;"></div>
<div class="t" style="left:881.00px;top:513.67px;font-size:8.3px;line-height:8.3px;color:#141414;transform:scaleX(0.9071);-webkit-text-stroke:0.2px #141414;">Set default</div>
<div class="r" style="left:1114px;top:510.4px;width:98.6px;height:14.3px;background:#e1e1e1;border:1px solid #c8c8c8;"></div>
<svg class="r" style="left:1116px;top:513px;" width="10" height="10" viewBox="0 0 10 10"><circle cx="5" cy="5" r="4" fill="#fff" stroke="#555" stroke-width="0.8"/></svg>
<div class="t" style="left:1129.00px;top:514.17px;font-size:8.3px;line-height:8.3px;color:#141414;transform:scaleX(0.8691);-webkit-text-stroke:0.2px #141414;">Show estimated tool path</div>
<div class="t" style="left:874.00px;top:532.97px;font-size:8.3px;line-height:8.3px;color:#141414;transform:scaleX(0.8986);-webkit-text-stroke:0.2px #141414;">Allow a tool Z rotation of +/-</div>
<div class="r" style="left:969px;top:529.6px;width:39.5px;height:13.2px;background:#ffffff;border:1px solid #b8b8b8;"></div>
<div class="t" style="left:971.00px;top:532.97px;font-size:8.3px;line-height:8.3px;color:#141414;transform:scaleX(0.8666);-webkit-text-stroke:0.2px #141414;">180.00</div>
<svg class="r" style="left:998px;top:530px;" width="10" height="12.5" viewBox="0 0 10 12.5"><rect x="0" y="0.5" width="9.5" height="11.5" fill="#e8e8e8" stroke="#c8c8c8" stroke-width="0.6"/><path d="M2.5 5.25L4.75 2.75L7 5.25Z M2.5 7.25L4.75 9.75L7 7.25Z" fill="#303030"/></svg>
<div class="t" style="left:1012.00px;top:532.97px;font-size:8.3px;line-height:8.3px;color:#141414;transform:scaleX(0.8882);-webkit-text-stroke:0.2px #141414;">deg by steps of</div>
<div class="r" style="left:1066.5px;top:529.6px;width:39.4px;height:13.2px;background:#ffffff;border:1px solid #b8b8b8;"></div>
<div class="t" style="left:1071.00px;top:532.97px;font-size:8.3px;line-height:8.3px;color:#141414;transform:scaleX(0.9629);-webkit-text-stroke:0.2px #141414;">20.00</div>
<svg class="r" style="left:1095px;top:530px;" width="10" height="12.5" viewBox="0 0 10 12.5"><rect x="0" y="0.5" width="9.5" height="11.5" fill="#e8e8e8" stroke="#c8c8c8" stroke-width="0.6"/><path d="M2.5 5.25L4.75 2.75L7 5.25Z M2.5 7.25L4.75 9.75L7 7.25Z" fill="#303030"/></svg>
<div class="t" style="left:1110.00px;top:532.97px;font-size:8.3px;line-height:8.3px;color:#141414;transform:scaleX(0.7943);-webkit-text-stroke:0.2px #141414;">deg</div>
<div class="r" style="left:867.6px;top:557.5px;width:352.4px;height:52.5px;border:1px solid #dcdcdc;box-shadow:inset 1px 1px 0 #fafafa;"></div>
<div class="r" style="left:871px;top:554px;width:114px;height:8px;background:#f0f0f0;"></div>
<div class="t" style="left:873.00px;top:553.37px;font-size:8.3px;line-height:8.3px;color:#141414;transform:scaleX(0.9018);-webkit-text-stroke:0.2px #141414;">Preferred joints for the start point</div>
<div class="r" style="left:874.3px;top:570.3px;width:49.3px;height:13.2px;background:#ffffff;border:1px solid #b8b8b8;"></div>
<div class="t" style="left:876.30px;top:573.27px;font-size:8.3px;line-height:8.3px;color:#141414;transform:scaleX(0.8272);-webkit-text-stroke:0.2px #141414;">0.0000</div>
<svg class="r" style="left:912.8px;top:570.8px;" width="10" height="12.200000000000045" viewBox="0 0 10 12.200000000000045"><rect x="0" y="0.5" width="9.5" height="11.200000000000045" fill="#e8e8e8" stroke="#c8c8c8" stroke-width="0.6"/><path d="M2.5 5.100000000000023L4.75 2.6000000000000227L7 5.100000000000023Z M2.5 7.100000000000023L4.75 9.600000000000023L7 7.100000000000023Z" fill="#303030"/></svg>
<div class="r" style="left:924.5px;top:570.3px;width:49.3px;height:13.2px;background:#ffffff;border:1px solid #b8b8b8;"></div>
<div class="t" style="left:926.50px;top:573.27px;font-size:8.3px;line-height:8.3px;color:#141414;transform:scaleX(0.8272);-webkit-text-stroke:0.2px #141414;">0.0000</div>
<svg class="r" style="left:963.0px;top:570.8px;" width="10" height="12.200000000000045" viewBox="0 0 10 12.200000000000045"><rect x="0" y="0.5" width="9.5" height="11.200000000000045" fill="#e8e8e8" stroke="#c8c8c8" stroke-width="0.6"/><path d="M2.5 5.100000000000023L4.75 2.6000000000000227L7 5.100000000000023Z M2.5 7.100000000000023L4.75 9.600000000000023L7 7.100000000000023Z" fill="#303030"/></svg>
<div class="r" style="left:973.2px;top:570.3px;width:49.3px;height:13.2px;background:#ffffff;border:1px solid #b8b8b8;"></div>
<div class="t" style="left:975.20px;top:573.27px;font-size:8.3px;line-height:8.3px;color:#141414;transform:scaleX(0.8272);-webkit-text-stroke:0.2px #141414;">0.0000</div>
<svg class="r" style="left:1011.7px;top:570.8px;" width="10" height="12.200000000000045" viewBox="0 0 10 12.200000000000045"><rect x="0" y="0.5" width="9.5" height="11.200000000000045" fill="#e8e8e8" stroke="#c8c8c8" stroke-width="0.6"/><path d="M2.5 5.100000000000023L4.75 2.6000000000000227L7 5.100000000000023Z M2.5 7.100000000000023L4.75 9.600000000000023L7 7.100000000000023Z" fill="#303030"/></svg>
<div class="r" style="left:1023.5px;top:570.3px;width:49.3px;height:13.2px;background:#ffffff;border:1px solid #b8b8b8;"></div>
<div class="t" style="left:1025.50px;top:573.27px;font-size:8.3px;line-height:8.3px;color:#141414;transform:scaleX(0.8272);-webkit-text-stroke:0.2px #141414;">0.0000</div>
<svg class="r" style="left:1062.0px;top:570.8px;" width="10" height="12.200000000000045" viewBox="0 0 10 12.200000000000045"><rect x="0" y="0.5" width="9.5" height="11.200000000000045" fill="#e8e8e8" stroke="#c8c8c8" stroke-width="0.6"/><path d="M2.5 5.100000000000023L4.75 2.6000000000000227L7 5.100000000000023Z M2.5 7.100000000000023L4.75 9.600000000000023L7 7.100000000000023Z" fill="#303030"/></svg>
<div class="r" style="left:1074.3px;top:570.3px;width:49.3px;height:13.2px;background:#ffffff;border:1px solid #b8b8b8;"></div>
<div class="t" style="left:1076.30px;top:573.27px;font-size:8.3px;line-height:8.3px;color:#141414;transform:scaleX(0.8272);-webkit-text-stroke:0.2px #141414;">0.0000</div>
<svg class="r" style="left:1112.8px;top:570.8px;" width="10" height="12.200000000000045" viewBox="0 0 10 12.200000000000045"><rect x="0" y="0.5" width="9.5" height="11.200000000000045" fill="#e8e8e8" stroke="#c8c8c8" stroke-width="0.6"/><path d="M2.5 5.100000000000023L4.75 2.6000000000000227L7 5.100000000000023Z M2.5 7.100000000000023L4.75 9.600000000000023L7 7.100000000000023Z" fill="#303030"/></svg>
<div class="r" style="left:1124.8px;top:570.3px;width:49.3px;height:13.2px;background:#ffffff;border:1px solid #b8b8b8;"></div>
<div class="t" style="left:1126.80px;top:573.27px;font-size:8.3px;line-height:8.3px;color:#141414;transform:scaleX(0.8272);-webkit-text-stroke:0.2px #141414;">0.0000</div>
<svg class="r" style="left:1163.3px;top:570.8px;" width="10" height="12.200000000000045" viewBox="0 0 10 12.200000000000045"><rect x="0" y="0.5" width="9.5" height="11.200000000000045" fill="#e8e8e8" stroke="#c8c8c8" stroke-width="0.6"/><path d="M2.5 5.100000000000023L4.75 2.6000000000000227L7 5.100000000000023Z M2.5 7.100000000000023L4.75 9.600000000000023L7 7.100000000000023Z" fill="#303030"/></svg>
<div class="r" style="left:1176.5px;top:570px;width:17.0px;height:14px;background:#e8e8e8;border:1px solid #cfcfcf;"></div>
<svg class="r" style="left:1180.5px;top:573px;" width="9" height="9" viewBox="0 0 9 9"><rect x="1" y="0.5" width="7" height="8" fill="#f4f4f4" stroke="#c8c8c8" stroke-width="0.8"/></svg>
<div class="r" style="left:1196.5px;top:570px;width:17.0px;height:14px;background:#e4e4e4;border:1px solid #c4c4c4;"></div>
<svg class="r" style="left:1200.5px;top:572px;" width="10" height="10" viewBox="0 0 10 10"><rect x="0.5" y="1" width="6" height="9" fill="#e8a040"/><rect x="3" y="2.5" width="6" height="8" fill="#fcfcfc" stroke="#ddd" stroke-width="0.5"/></svg>
<div class="r" style="left:874.7px;top:590px;width:48.299999999999955px;height:13.200000000000045px;background:#e1e1e1;border:1px solid #b4b4b4;"></div>
<div class="t" style="left:881.00px;top:592.87px;font-size:8.3px;line-height:8.3px;color:#141414;transform:scaleX(0.9071);-webkit-text-stroke:0.2px #141414;">Set default</div>
<div class="r" style="left:925.4px;top:590px;width:47.60000000000002px;height:13.200000000000045px;background:#e1e1e1;border:1px solid #b4b4b4;"></div>
<div class="t" style="left:931.20px;top:592.87px;font-size:8.3px;line-height:8.3px;color:#141414;transform:scaleX(0.8868);-webkit-text-stroke:0.2px #141414;">Set current</div>
<div class="r" style="left:974.4px;top:590px;width:239px;height:13.2px;background:#e4e4e4;border:1px solid #bcbcbc;"></div>
<div class="t" style="left:985.00px;top:593.53px;font-size:7.4px;line-height:7.4px;color:#1a1a1a;font-family:'Liberation Mono',monospace;transform:scaleX(0.8985);-webkit-text-stroke:0.2px #1a1a1a;">-45.5,</div>
<div class="t" style="left:1024.70px;top:593.53px;font-size:7.4px;line-height:7.4px;color:#1a1a1a;font-family:'Liberation Mono',monospace;transform:scaleX(0.8985);-webkit-text-stroke:0.2px #1a1a1a;">16.5,</div>
<div class="t" style="left:1057.30px;top:593.53px;font-size:7.4px;line-height:7.4px;color:#1a1a1a;font-family:'Liberation Mono',monospace;transform:scaleX(0.8985);-webkit-text-stroke:0.2px #1a1a1a;">-71.5,</div>
<div class="t" style="left:1092.90px;top:593.53px;font-size:7.4px;line-height:7.4px;color:#1a1a1a;font-family:'Liberation Mono',monospace;transform:scaleX(0.8985);-webkit-text-stroke:0.2px #1a1a1a;">-88.2,</div>
<div class="t" style="left:1128.70px;top:593.53px;font-size:7.4px;line-height:7.4px;color:#1a1a1a;font-family:'Liberation Mono',monospace;transform:scaleX(0.8985);-webkit-text-stroke:0.2px #1a1a1a;">-58.8,</div>
<div class="t" style="left:1164.80px;top:593.53px;font-size:7.4px;line-height:7.4px;color:#1a1a1a;font-family:'Liberation Mono',monospace;transform:scaleX(0.8985);-webkit-text-stroke:0.2px #1a1a1a;">103.8</div>
<svg class="r" style="left:1202px;top:594.5px;" width="7" height="5" viewBox="0 0 7 5"><path d="M0.5 0.5L3.5 3.5L6.5 0.5" fill="none" stroke="#505050" stroke-width="0.9"/></svg>
<svg class="r" style="left:867px;top:617.5px;" width="10" height="10" viewBox="0 0 10 10"><rect x="0.5" y="0.5" width="9" height="9" fill="#fff" stroke="#555" stroke-width="0.9"/><path d="M2 4.8L3.78 6.8L7.2 2" fill="none" stroke="#333" stroke-width="1"/></svg>
<div class="t" style="left:879.00px;top:617.87px;font-size:8.3px;line-height:8.3px;color:#141414;transform:scaleX(0.8894);-webkit-text-stroke:0.2px #141414;">auto update</div>
<div class="t" style="left:867.00px;top:635.47px;font-size:8.3px;line-height:8.3px;color:#141414;transform:scaleX(0.8577);-webkit-text-stroke:0.2px #141414;">Path solved successfully.</div>
<svg class="r" style="left:1079px;top:615px;" width="33" height="34" viewBox="0 0 33 34"><defs><radialGradient id="gChk" cx="0.4" cy="0.3" r="0.75"><stop offset="0" stop-color="#80f080"/><stop offset="0.6" stop-color="#18b818"/><stop offset="1" stop-color="#0a7a10"/></radialGradient></defs><circle cx="16" cy="17" r="15.5" fill="url(#gChk)"/><path d="M7 17L13 25L26 9L24 8L13 20L10 15Z" fill="#fff"/></svg>
<div class="r" style="left:1116.8px;top:617.3px;width:48.299999999999955px;height:30.300000000000068px;background:#e1e1e1;border:1px solid #b4b4b4;"></div>
<div class="t" style="left:1129.50px;top:628.77px;font-size:8.3px;line-height:8.3px;color:#141414;transform:scaleX(0.8593);-webkit-text-stroke:0.2px #141414;">Update</div>
<div class="r" style="left:1170.8px;top:617.3px;width:48.200000000000045px;height:30.300000000000068px;background:#e1e1e1;border:1px solid #b4b4b4;"></div>
<div class="t" style="left:1181.40px;top:628.77px;font-size:8.3px;line-height:8.3px;color:#141414;transform:scaleX(0.8361);-webkit-text-stroke:0.2px #141414;">Simulate</div>
<div class="r" style="left:-5px;top:661px;width:17px;height:13px;background:#e6e6e6;border:1px solid #c8c8c8;"></div>
<div class="r" style="left:15px;top:661px;width:17px;height:13px;background:#e6e6e6;border:1px solid #c8c8c8;"></div>
<div class="r" style="left:36px;top:661px;width:17px;height:13px;background:#e6e6e6;border:1px solid #c8c8c8;"></div>
<div class="r" style="left:56px;top:661px;width:17px;height:13px;background:#e6e6e6;border:1px solid #c8c8c8;"></div>
<div class="r" style="left:77px;top:661px;width:17px;height:13px;background:#e6e6e6;border:1px solid #c8c8c8;"></div>
<div class="r" style="left:98px;top:661px;width:17px;height:13px;background:#e6e6e6;border:1px solid #c8c8c8;"></div>
<svg class="r" style="left:0px;top:663px;" width="12" height="10" viewBox="0 0 12 10"><path d="M9 1L3 5L9 9Z" fill="#3aa0e0"/><rect x="1" y="1" width="2" height="8" fill="#3aa0e0"/></svg>
<svg class="r" style="left:19px;top:663px;" width="12" height="10" viewBox="0 0 12 10"><rect x="1" y="1" width="3" height="9" fill="#6ab8ee"/><rect x="6" y="1" width="3" height="9" fill="#6ab8ee"/></svg>
<svg class="r" style="left:40px;top:663px;" width="12" height="10" viewBox="0 0 12 10"><path d="M2 1L9 5.5L2 10Z" fill="#3aa0e0"/></svg>
<svg class="r" style="left:60px;top:663px;" width="12" height="10" viewBox="0 0 12 10"><path d="M1 2L6 5.5L1 9Z M6 2L11 5.5L6 9Z" fill="#3aa0e0"/></svg>
<svg class="r" style="left:81px;top:663px;" width="12" height="10" viewBox="0 0 12 10"><path d="M2 1L7 5L2 9Z" fill="#3aa0e0"/><rect x="7" y="1" width="2" height="8" fill="#3aa0e0"/></svg>
<svg class="r" style="left:101px;top:663px;" width="12" height="10" viewBox="0 0 12 10"><path d="M2 8 Q4 2 9 4" fill="none" stroke="#1a6ab0" stroke-width="2"/><path d="M8 2L11 6L7 7Z" fill="#1a6ab0"/></svg>
<div class="r" style="left:118px;top:666px;width:1012px;height:3px;background:#e0e0e0;border:1px solid #d0d0d0;"></div>
<div class="r" style="left:1135px;top:661px;width:7px;height:12px;background:#1a78e0;"></div>
<div class="r" style="left:1144px;top:661px;width:33px;height:12px;background:#fff;border:1px solid #b8b8b8;"></div>
<div class="t" style="left:1146.00px;top:664.73px;font-size:8px;line-height:8px;color:#202020;transform:scaleX(0.9552);">2868</div>
<svg class="r" style="left:1167px;top:662px;" width="9" height="11" viewBox="0 0 9 11"><rect x="0" y="0" width="9" height="11" fill="#e8e8e8"/><path d="M2 4L4.5 1.5L7 4Z M2 7L4.5 9.5L7 7Z" fill="#333"/></svg>
<div class="t" style="left:1180.00px;top:664.30px;font-size:8.5px;line-height:8.5px;color:#111;font-family:'Liberation Sans',sans-serif;font-weight:bold;transform:scaleX(0.8933);">Weld</div>
<div class="t" style="left:1200.00px;top:664.30px;font-size:8.5px;line-height:8.5px;color:#333;transform:scaleX(0.8659);">time: 30.2s</div>
<div class="r" style="left:1252px;top:660px;width:6px;height:13px;background:#f8f8f8;border-left:1px solid #ccc;"></div>
<svg class="r" style="left:1253px;top:662px;" width="5" height="10" viewBox="0 0 5 10"><path d="M1 1L5 6M5 1L1 6" stroke="#e03030" stroke-width="1.5"/></svg></body></html>
